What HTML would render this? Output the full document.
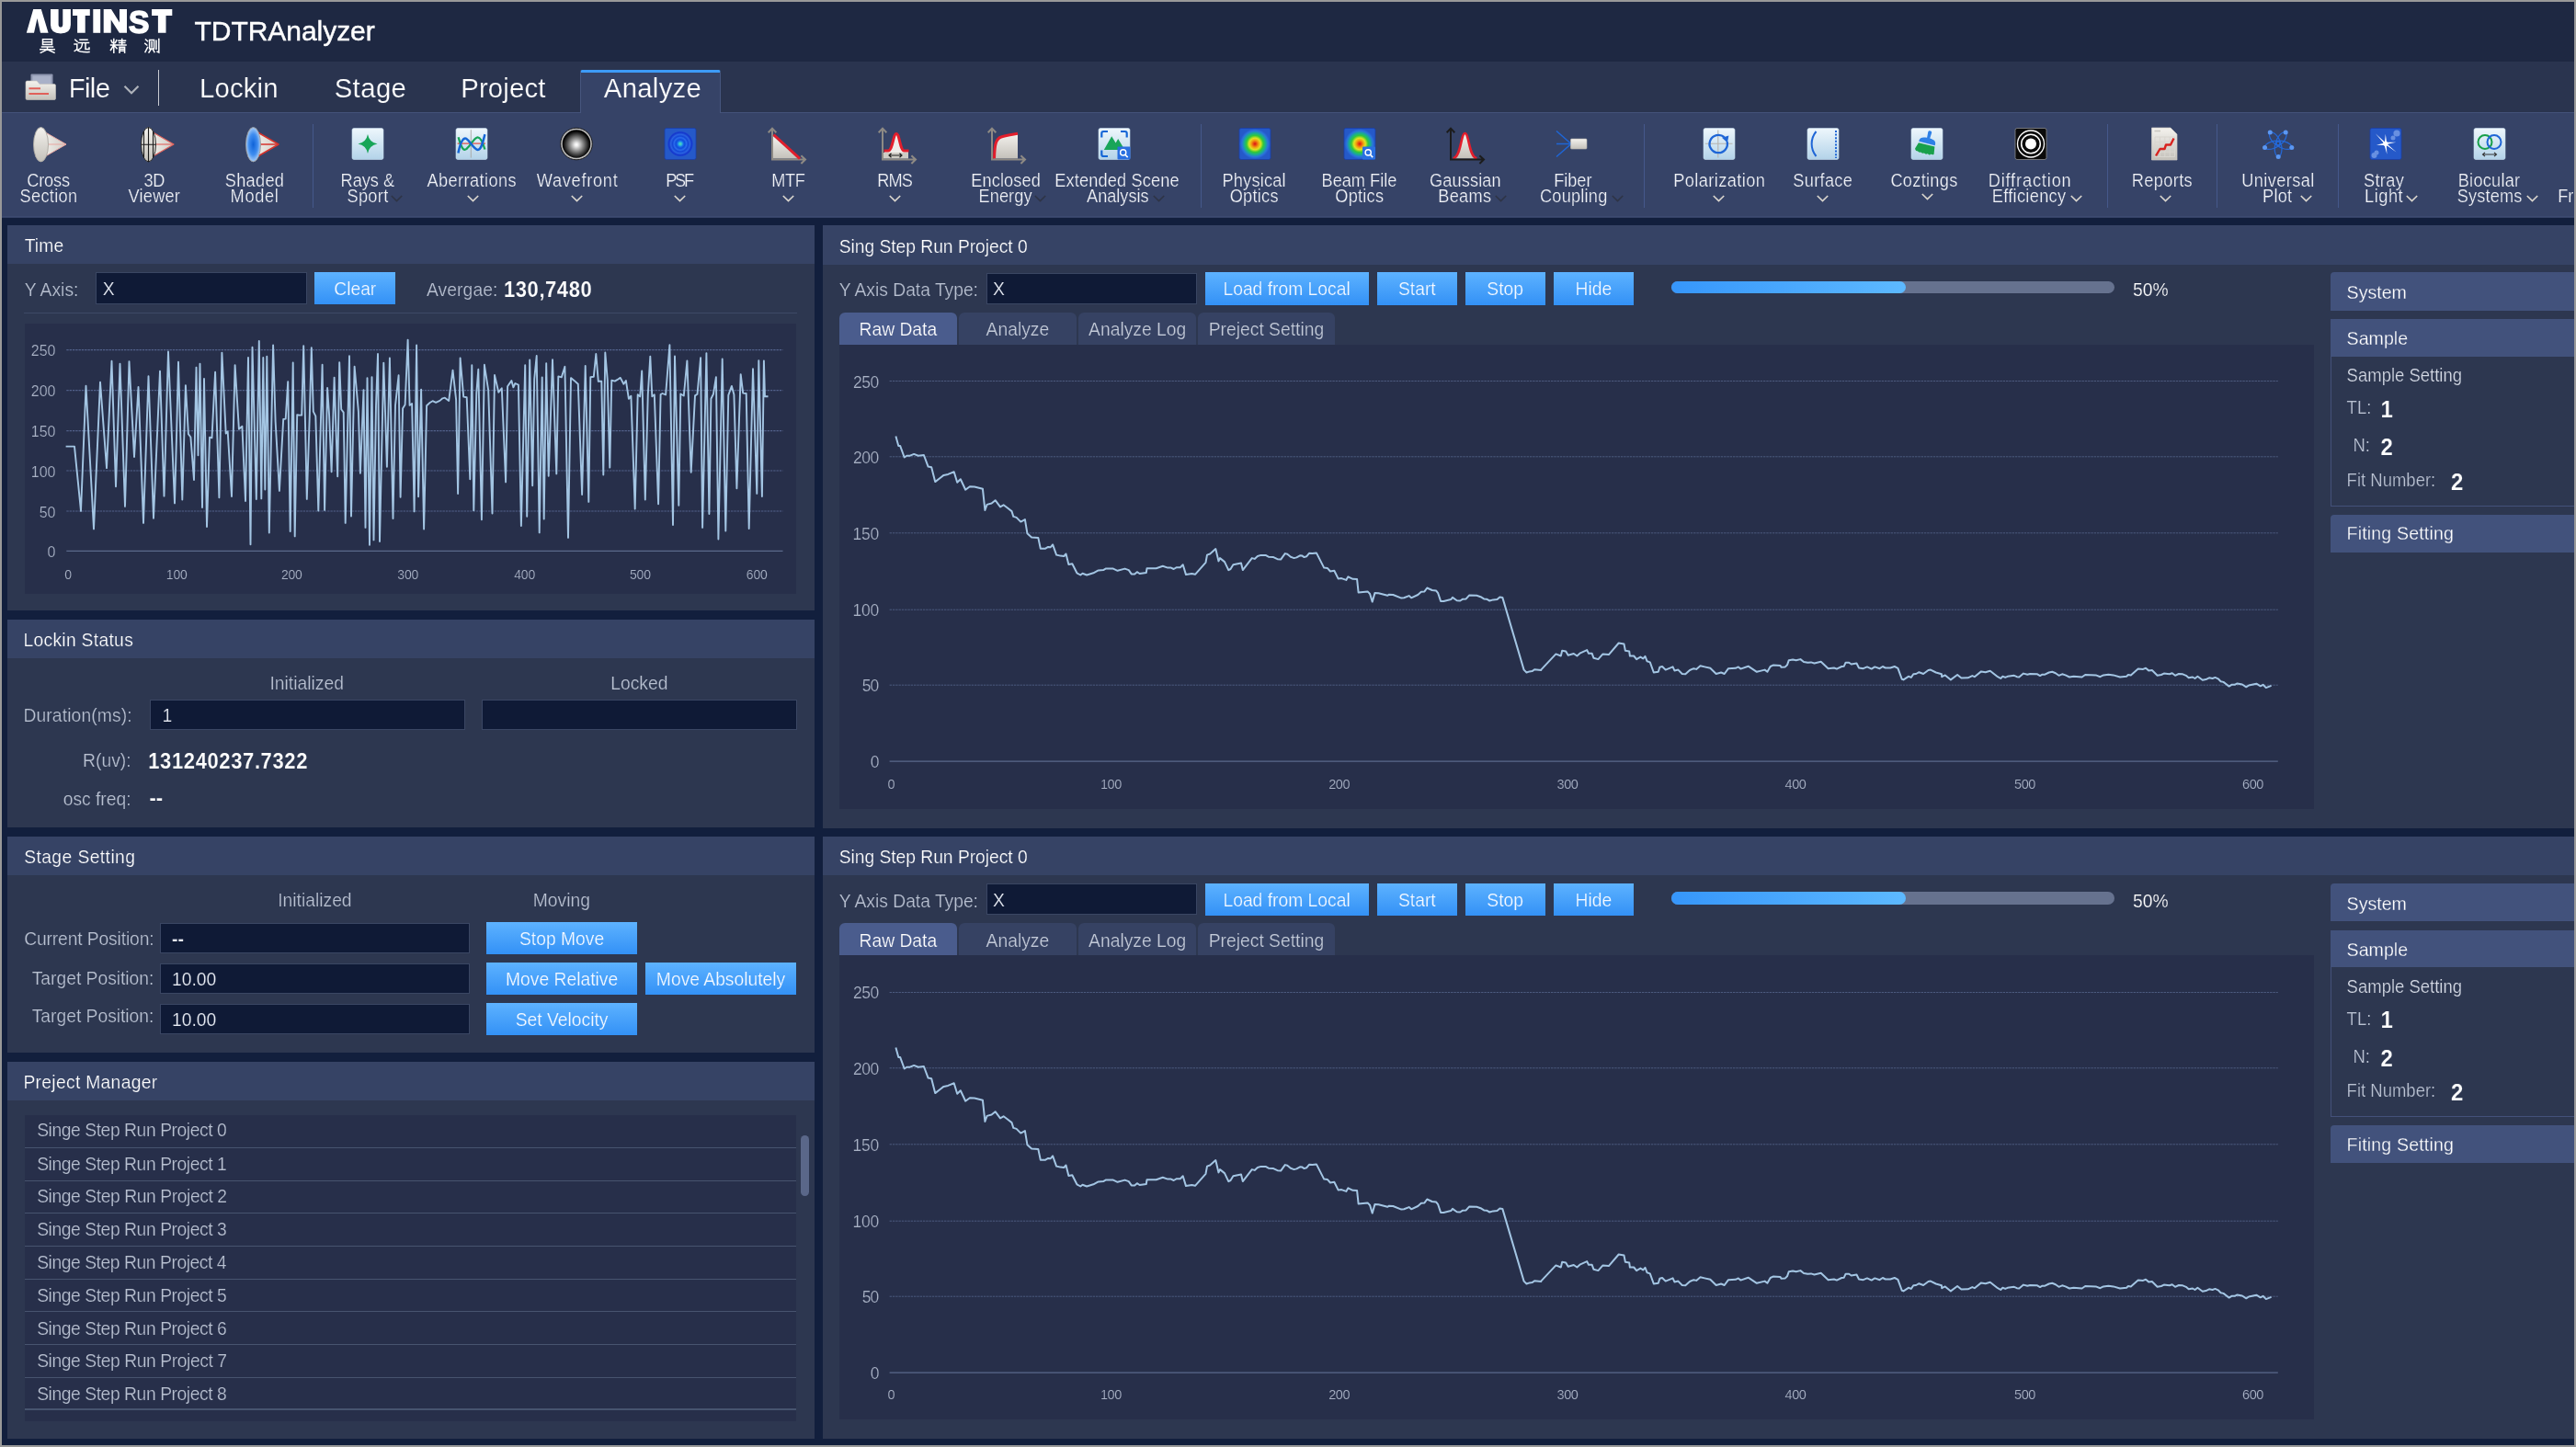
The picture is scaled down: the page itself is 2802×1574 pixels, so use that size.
<!DOCTYPE html>
<html><head><meta charset="utf-8"><title>TDTRAnalyzer</title><style>
*{margin:0;padding:0;box-sizing:border-box}
html,body{width:2802px;height:1574px;overflow:hidden;background:#999}
body{font-family:"Liberation Sans",sans-serif;position:relative}
#app{position:absolute;left:2px;top:2px;width:2798px;height:1570px;background:#121f3d;overflow:hidden}
#root{position:absolute;left:-2px;top:-2px;width:2802px;height:1574px;will-change:transform}
.t{position:absolute;line-height:1;white-space:nowrap}
.panel{background:#2d3750}
.hdr{background:#364365}
.inner{background:#272f4a}
.inp{background:#0f1a36;border:1px solid #3a4663}
.btn{background:linear-gradient(#5db2ff,#3391f6)}
.sep{background:#45588b}
svg{position:absolute;overflow:visible}
</style></head>
<body><div id="app"><div id="root">

<svg width="0" height="0" style="position:absolute"><defs>
<linearGradient id="gTile" x1="0" y1="0" x2="0" y2="1"><stop offset="0" stop-color="#eef7fc"/><stop offset="1" stop-color="#b3d3e9"/></linearGradient>
<linearGradient id="gGrey" x1="0" y1="0" x2="0" y2="1"><stop offset="0" stop-color="#f4f2ee"/><stop offset="1" stop-color="#c4c1ba"/></linearGradient>
<linearGradient id="gGreyH" x1="0" y1="0" x2="1" y2="0"><stop offset="0" stop-color="#f4f2ee"/><stop offset="1" stop-color="#cfccc5"/></linearGradient>
<radialGradient id="gBlueLens"><stop offset="0" stop-color="#0f63d8"/><stop offset="0.6" stop-color="#3f8df0"/><stop offset="1" stop-color="#a9cdf7"/></radialGradient>
<radialGradient id="gSphere" cx="0.5" cy="0.53"><stop offset="0" stop-color="#ffffff"/><stop offset="0.12" stop-color="#ececec"/><stop offset="0.45" stop-color="#8e8e8e"/><stop offset="0.75" stop-color="#3a3a3a"/><stop offset="0.92" stop-color="#0c0c0c"/><stop offset="1" stop-color="#000"/></radialGradient>
<radialGradient id="gPsf"><stop offset="0" stop-color="#5fe0a8"/><stop offset="0.14" stop-color="#28b0e0"/><stop offset="0.25" stop-color="#1a66e6"/><stop offset="0.36" stop-color="#0f4cdc"/><stop offset="0.5" stop-color="#2a6cec"/><stop offset="0.62" stop-color="#1346d6"/><stop offset="0.76" stop-color="#2a64e2"/><stop offset="0.9" stop-color="#1538cc"/><stop offset="1" stop-color="#1a40cf"/></radialGradient>
<radialGradient id="gHeat"><stop offset="0" stop-color="#d41414"/><stop offset="0.1" stop-color="#e84812"/><stop offset="0.24" stop-color="#f0a010"/><stop offset="0.38" stop-color="#dfe322"/><stop offset="0.55" stop-color="#35c837"/><stop offset="0.7" stop-color="#19ae90"/><stop offset="0.86" stop-color="#2a74dc"/><stop offset="1" stop-color="#2559c9"/></radialGradient>
</defs></svg>

<div style="position:absolute;left:2.00px;top:2.00px;width:2798.00px;height:65.00px;background:#1e2842"></div>
<svg style="left:28px;top:9px" width="162" height="50" viewBox="0 0 162 50"><path d="M8.2 1 H16.8 L24.6 26.8 H16 L12.5 11 L9 26.8 H0.8 Z" fill="#fff"/><path d="M27 1 H35.6 V17.5 Q35.6 20.6 38 20.6 Q40.3 20.6 40.3 17.5 V1 H48.9 V18 Q48.9 27.4 38 27.4 Q27 27.4 27 18 Z" fill="#fff"/><path d="M51 1 H69.8 V8 H64.7 V26.8 H56.1 V8 H51 Z" fill="#fff"/><path d="M73.3 1 H81.2 V26.8 H73.3 Z" fill="#fff"/><path d="M84.7 1 H93 L102 15.5 V1 H110 V26.8 H101.8 L92.7 12.5 V26.8 H84.7 Z" fill="#fff"/><text x="112" y="26.5" font-family="Liberation Sans, sans-serif" font-weight="700" font-size="35.2" fill="#fff" stroke="#fff" stroke-width="1.6" textLength="22.4" lengthAdjust="spacingAndGlyphs">S</text><path d="M137.1 1 H159.3 V8 H152.5 V26.8 H143.9 V8 H137.1 Z" fill="#fff"/><g id="cjk" stroke="#fff" stroke-width="1.5" fill="none" stroke-linecap="square"><path d="M18.5 33.8 H28.5 V39.6 H18.5 Z M18.5 36.7 H28.5 M17.5 42 H29.5 M15.8 44.8 H31.2 M23.5 42 V44.8 L16.3 48.3 M23.6 44.8 L31 48.3"/><path d="M59 34.2 H67 M57.5 37.5 H68.5 M61.5 37.5 C61.5 42 60.5 43.5 57.5 45 M65 37.5 V44.5 H69 V43 M53.8 34.2 L56 36.2 M53 39 H55.8 V44.5 L53.2 46.5 M55.8 45.2 C58 47.5 62 47.8 69 47.6"/><path d="M95.8 33.5 V48.3 M92.5 40 H99.2 M93 35 L94.3 37.6 M98.8 34.8 L97.4 37.6 M95.6 40.4 L92.4 45.5 M96 40.4 L99 43.6 M101 35.2 H108.5 M104.7 33.4 V40 M101.6 37.6 H107.8 M100.3 40 H109 M102 42.2 H107.6 V48.3 M102 42.2 V48.3 M102 44.3 H107.6 M102 46.3 H107.6"/><path d="M130.5 34 L132.5 35.8 M129.8 38.4 L131.8 40 M130 47.6 L132.5 42.6 M134.6 34.4 H139.6 V44 H134.6 Z M137.1 36.4 V42 M136.4 44.4 L134 48 M138 44.4 L140 47.6 M142 35.2 V44.2 M144.8 33.6 V48 L143 47.2"/></g></svg>
<div class="t" style="top:19.11px;font-size:30px;color:#ffffff;letter-spacing:-0.05px;left:211.60px;-webkit-text-stroke:0.45px #fff;">TDTRAnalyzer</div>
<div style="position:absolute;left:2.00px;top:67.00px;width:2798.00px;height:56.00px;background:#2a344f"></div>
<svg style="left:27px;top:79px" width="35" height="31" viewBox="0 0 35 31"><rect x="6.5" y="1.5" width="24" height="18" rx="1" fill="#8e96b0"/><rect x="8.5" y="3.5" width="20" height="14" fill="#a9b1c8"/><path d="M1 10.5 Q1 9 2.5 9 H13 L16 12.5 H32 Q33.5 12.5 33.5 14 V28 Q33.5 29.5 32 29.5 H2.5 Q1 29.5 1 28 Z" fill="url(#gGrey)" stroke="#c9c6c0" stroke-width="0.6"/><path d="M4.5 17.2 H17 M4.5 23 H26" stroke="#e0605a" stroke-width="2"/></svg>
<div class="t" style="top:81.30px;font-size:29.3px;color:#ffffff;-webkit-text-stroke:0.21px #2a344f;letter-spacing:-0.617px;left:74.65px;">File</div>
<svg style="left:134px;top:92px" width="18" height="12" viewBox="0 0 18 12"><path d="M1.5 1.8 L9 9.3 L16.5 1.8" fill="none" stroke="#aeb2ba" stroke-width="2.2"/></svg>
<div style="position:absolute;left:171.50px;top:75.50px;width:1.70px;height:39.50px;background:#c9ccd3"></div>
<div style="position:absolute;left:2.00px;top:122.30px;width:2798.00px;height:1.20px;background:#44537a"></div>
<div style="position:absolute;left:631.00px;top:75.50px;width:153.00px;height:48.10px;background:#364367;border-top:3.5px solid #3d9bf7;border-left:1px solid #46567e;border-right:1px solid #46567e;border-radius:2.5px 2.5px 0 0"></div>
<div class="t" style="top:81.30px;font-size:29.3px;color:#ffffff;-webkit-text-stroke:0.21px #2a344f;letter-spacing:0.15px;left:217.05px;">Lockin</div>
<div class="t" style="top:81.30px;font-size:29.3px;color:#ffffff;-webkit-text-stroke:0.21px #2a344f;letter-spacing:0.425px;left:363.65px;">Stage</div>
<div class="t" style="top:81.30px;font-size:29.3px;color:#ffffff;-webkit-text-stroke:0.21px #2a344f;letter-spacing:0.158px;left:501.25px;">Project</div>
<div class="t" style="top:81.30px;font-size:29.3px;color:#ffffff;-webkit-text-stroke:0.21px #364367;letter-spacing:0.3px;left:656.80px;">Analyze</div>
<div style="position:absolute;left:2.00px;top:123.00px;width:2798.00px;height:113.50px;background:#364367"></div>
<div style="position:absolute;left:2.00px;top:235.40px;width:2798.00px;height:1.10px;background:#3c4a70"></div>
<svg style="left:35.1px;top:134px" width="44" height="44" viewBox="0 0 44 44"><path d="M11 8 L37 23 L11 38 Z" fill="url(#gGreyH)" stroke="#e9a7a2" stroke-width="1.0" stroke-linejoin="round"/><path d="M11 23 L37 23" stroke="#e9a7a2" stroke-width="1.0"/><ellipse cx="9.5" cy="23.2" rx="8" ry="18.7" fill="url(#gGrey)" stroke="#aaa7a0" stroke-width="0.9"/></svg>
<div class="t" style="top:187.89px;font-size:18.2px;color:#f0f2f7;-webkit-text-stroke:0.22px #364367;transform:scaleY(1.1);transform-origin:0 84.65%;letter-spacing:-0.188px;left:29.25px;">Cross</div>
<div class="t" style="top:205.49px;font-size:18.2px;color:#f0f2f7;-webkit-text-stroke:0.22px #364367;transform:scaleY(1.1);transform-origin:0 84.65%;letter-spacing:0.325px;left:21.55px;">Section</div>
<svg style="left:151.7px;top:134px" width="44" height="44" viewBox="0 0 44 44"><path d="M11 8 L37 23 L11 38 Z" fill="url(#gGreyH)" stroke="#e0625c" stroke-width="1.1" stroke-linejoin="round"/><path d="M11 23 L37 23" stroke="#e0625c" stroke-width="1.1"/><ellipse cx="9.5" cy="23.2" rx="8" ry="18.7" fill="url(#gGrey)" stroke="#1a1a1a" stroke-width="0.9"/><path d="M9.5 4.5 V42 M4.5 9 V37.5 M14.5 9 V37.5 M1.6 23.2 H17.4" stroke="#1a1a1a" stroke-width="1.1" fill="none"/></svg>
<div class="t" style="top:187.89px;font-size:18.2px;color:#f0f2f7;-webkit-text-stroke:0.22px #364367;transform:scaleY(1.1);transform-origin:0 84.65%;letter-spacing:-0.5px;left:156.60px;">3D</div>
<div class="t" style="top:205.49px;font-size:18.2px;color:#f0f2f7;-webkit-text-stroke:0.22px #364367;transform:scaleY(1.1);transform-origin:0 84.65%;letter-spacing:0.21px;left:139.60px;">Viewer</div>
<svg style="left:265.8px;top:134px" width="44" height="44" viewBox="0 0 44 44"><path d="M11 8 L37 23 L11 38 Z" fill="url(#gGreyH)" stroke="#d6332c" stroke-width="1.5" stroke-linejoin="round"/><path d="M11 23 L37 23" stroke="#d6332c" stroke-width="1.5"/><ellipse cx="9.5" cy="23.2" rx="8" ry="18.7" fill="url(#gBlueLens)" stroke="#9a9a9a" stroke-width="0.9"/></svg>
<div class="t" style="top:187.89px;font-size:18.2px;color:#f0f2f7;-webkit-text-stroke:0.22px #364367;transform:scaleY(1.1);transform-origin:0 84.65%;letter-spacing:0.3px;left:244.75px;">Shaded</div>
<div class="t" style="top:205.49px;font-size:18.2px;color:#f0f2f7;-webkit-text-stroke:0.22px #364367;transform:scaleY(1.1);transform-origin:0 84.65%;letter-spacing:0.688px;left:250.55px;">Model</div>
<svg style="left:378.2px;top:134px" width="44" height="44" viewBox="0 0 44 44"><rect x="5" y="5.5" width="34" height="34" rx="2" fill="url(#gTile)" stroke="#c9dff0" stroke-width="0.6"/><path d="M22 12 Q23.6 20.9 32.5 22.5 Q23.6 24.1 22 33 Q20.4 24.1 11.5 22.5 Q20.4 20.9 22 12 Z" fill="#18a558"/></svg>
<div class="t" style="top:187.89px;font-size:18.2px;color:#f0f2f7;-webkit-text-stroke:0.22px #364367;transform:scaleY(1.1);transform-origin:0 84.65%;letter-spacing:-0.03px;left:370.55px;">Rays &amp;</div>
<div class="t" style="top:205.49px;font-size:18.2px;color:#f0f2f7;-webkit-text-stroke:0.22px #364367;transform:scaleY(1.1);transform-origin:0 84.65%;letter-spacing:0.338px;left:377.45px;">Sport</div>
<svg style="left:425.2px;top:211.6px" width="13" height="8" viewBox="0 0 13 8"><path d="M0.8 1 L6.5 6.6 L12.2 1" fill="none" stroke="#2e3446" stroke-width="1.7"/></svg>
<svg style="left:491.0px;top:134px" width="44" height="44" viewBox="0 0 44 44"><rect x="5" y="5.5" width="34" height="34" rx="2" fill="url(#gTile)" stroke="#c9dff0" stroke-width="0.6"/><path d="M21.3 7.2 V37.6" stroke="#a9a6a0" stroke-width="0.9"/><path d="M6.6 22.1 H37" stroke="#e0605a" stroke-width="1.4"/><path d="M7.6 15.3 C9.5 22 11.5 28.9 14.5 28.9 C19 28.9 24 15.3 28.7 15.3 C32 15.3 34.5 22 36.4 28.5" stroke="#18a558" stroke-width="2.3" fill="none"/><path d="M7.4 32.6 C9.5 22 12 16.5 15.1 16.5 C19 16.5 24 28.9 28.7 28.9 C32.5 28.9 34.5 20 36.4 12.1" stroke="#1466d6" stroke-width="2.5" fill="none"/></svg>
<div class="t" style="top:187.89px;font-size:18.2px;color:#f0f2f7;-webkit-text-stroke:0.22px #364367;transform:scaleY(1.1);transform-origin:0 84.65%;letter-spacing:0.41px;left:464.50px;">Aberrations</div>
<svg style="left:508.2px;top:211.6px" width="13" height="8" viewBox="0 0 13 8"><path d="M0.8 1 L6.5 6.6 L12.2 1" fill="none" stroke="#d9d5cd" stroke-width="1.7"/></svg>
<svg style="left:605.0px;top:134px" width="44" height="44" viewBox="0 0 44 44"><circle cx="22" cy="22.5" r="17.3" fill="#bdbdbd" stroke="#141414" stroke-width="0.9"/><circle cx="22" cy="22.5" r="15.3" fill="url(#gSphere)"/></svg>
<div class="t" style="top:187.89px;font-size:18.2px;color:#f0f2f7;-webkit-text-stroke:0.22px #364367;transform:scaleY(1.1);transform-origin:0 84.65%;letter-spacing:0.725px;left:583.75px;">Wavefront</div>
<svg style="left:620.7px;top:211.6px" width="13" height="8" viewBox="0 0 13 8"><path d="M0.8 1 L6.5 6.6 L12.2 1" fill="none" stroke="#d9d5cd" stroke-width="1.7"/></svg>
<svg style="left:718.4px;top:134px" width="44" height="44" viewBox="0 0 44 44"><rect x="5" y="5.5" width="34" height="34" rx="2" fill="#2559c9" stroke="#1b3fa8" stroke-width="0.8"/><circle cx="22" cy="22.5" r="13.6" fill="url(#gPsf)"/></svg>
<div class="t" style="top:187.89px;font-size:18.2px;color:#f0f2f7;-webkit-text-stroke:0.22px #364367;transform:scaleY(1.1);transform-origin:0 84.65%;letter-spacing:-2.15px;left:724.15px;">PSF</div>
<svg style="left:733.2px;top:211.6px" width="13" height="8" viewBox="0 0 13 8"><path d="M0.8 1 L6.5 6.6 L12.2 1" fill="none" stroke="#d9d5cd" stroke-width="1.7"/></svg>
<svg style="left:829.5px;top:134px" width="44" height="44" viewBox="0 0 44 44"><path d="M11 14 L39 38.6 H11 Z" fill="url(#gGrey)"/><path d="M10 39.6 V5.8 M5.7 10.2 L10 5.6 L14.3 10.2" stroke="#8e8a84" stroke-width="2" fill="none"/><path d="M9 39.6 H45.6 M41.4 35.3 L46 39.6 L41.4 43.9" stroke="#8e8a84" stroke-width="2" fill="none"/><path d="M11.5 12.5 L40 38.6" stroke="#e21e2c" stroke-width="3"/></svg>
<div class="t" style="top:187.89px;font-size:18.2px;color:#f0f2f7;-webkit-text-stroke:0.22px #364367;transform:scaleY(1.1);transform-origin:0 84.65%;letter-spacing:-0.4px;left:839.25px;">MTF</div>
<svg style="left:851.1px;top:211.6px" width="13" height="8" viewBox="0 0 13 8"><path d="M0.8 1 L6.5 6.6 L12.2 1" fill="none" stroke="#d9d5cd" stroke-width="1.7"/></svg>
<svg style="left:949.5px;top:134px" width="44" height="44" viewBox="0 0 44 44"><path d="M11 32 H38 V38.6 H11 Z" fill="#cfccc5"/><path d="M12 30 H16 C21 30 21.5 11.5 25 11.5 S29 30 33.5 30 H38 V32 H12 Z" fill="#efedea"/><path d="M11.5 30 H16 C21 30 21.5 11.5 25 11.5 S29 30 33.5 30 H38.5" stroke="#e21e2c" stroke-width="3" fill="none"/><path d="M10 39.6 V5.8 M5.7 10.2 L10 5.6 L14.3 10.2" stroke="#8e8a84" stroke-width="2" fill="none"/><path d="M9 39.6 H45.6 M41.4 35.3 L46 39.6 L41.4 43.9" stroke="#8e8a84" stroke-width="2" fill="none"/><path d="M17 35 H31 M19.5 32.7 L17 35 L19.5 37.3 M28.5 32.7 L31 35 L28.5 37.3" stroke="#222" stroke-width="1.2" fill="none"/></svg>
<div class="t" style="top:187.89px;font-size:18.2px;color:#f0f2f7;-webkit-text-stroke:0.22px #364367;transform:scaleY(1.1);transform-origin:0 84.65%;letter-spacing:-0.8px;left:954.15px;">RMS</div>
<svg style="left:967.0px;top:211.6px" width="13" height="8" viewBox="0 0 13 8"><path d="M0.8 1 L6.5 6.6 L12.2 1" fill="none" stroke="#d9d5cd" stroke-width="1.7"/></svg>
<svg style="left:1068.6px;top:134px" width="44" height="44" viewBox="0 0 44 44"><path d="M12 38.6 C12.5 22 14 16.5 20 14.5 C26 12.5 32 12 38 11 V38.6 Z" fill="url(#gGrey)"/><path d="M12.5 38.6 C13 22 14.5 17 20 15 C26 13 32 12.3 38 11.2" stroke="#e21e2c" stroke-width="3" fill="none"/><path d="M10 39.6 V5.8 M5.7 10.2 L10 5.6 L14.3 10.2" stroke="#8e8a84" stroke-width="2" fill="none"/><path d="M9 39.6 H45.6 M41.4 35.3 L46 39.6 L41.4 43.9" stroke="#8e8a84" stroke-width="2" fill="none"/></svg>
<div class="t" style="top:187.89px;font-size:18.2px;color:#f0f2f7;-webkit-text-stroke:0.22px #364367;transform:scaleY(1.1);transform-origin:0 84.65%;letter-spacing:0.1px;left:1056.25px;">Enclosed</div>
<div class="t" style="top:205.49px;font-size:18.2px;color:#f0f2f7;-webkit-text-stroke:0.22px #364367;transform:scaleY(1.1);transform-origin:0 84.65%;letter-spacing:0.1px;left:1064.45px;">Energy</div>
<svg style="left:1124.5px;top:211.6px" width="13" height="8" viewBox="0 0 13 8"><path d="M0.8 1 L6.5 6.6 L12.2 1" fill="none" stroke="#2e3446" stroke-width="1.7"/></svg>
<svg style="left:1190.4px;top:134px" width="44" height="44" viewBox="0 0 44 44"><rect x="5" y="5.5" width="34" height="34" rx="2" fill="url(#gTile)" stroke="#c9dff0" stroke-width="0.6"/><path d="M8.3 15.5 V11 Q8.3 9 10.3 9 H15 M29 9 H33.7 Q35.7 9 35.7 11 V15.5 M8.3 29.5 V34 Q8.3 36 10.3 36 H15" stroke="#1466d6" stroke-width="2.2" fill="none"/><path d="M10.8 29 L19.2 14.2 L23.6 21.5 L26.2 17 L33.4 29 Z" fill="#18a558"/><rect x="25.5" y="25.5" width="14" height="14" rx="1" fill="#2a6fe0"/><circle cx="31.7" cy="31.9" r="3.1" fill="none" stroke="#fff" stroke-width="1.4"/><path d="M33.9 34.3 L36.7 37.1" stroke="#fff" stroke-width="1.6"/></svg>
<div class="t" style="top:187.89px;font-size:18.2px;color:#f0f2f7;-webkit-text-stroke:0.22px #364367;transform:scaleY(1.1);transform-origin:0 84.65%;letter-spacing:0.135px;left:1147.35px;">Extended Scene</div>
<div class="t" style="top:205.49px;font-size:18.2px;color:#f0f2f7;-webkit-text-stroke:0.22px #364367;transform:scaleY(1.1);transform-origin:0 84.65%;letter-spacing:-0.036px;left:1182.10px;">Analysis</div>
<svg style="left:1253.6px;top:211.6px" width="13" height="8" viewBox="0 0 13 8"><path d="M0.8 1 L6.5 6.6 L12.2 1" fill="none" stroke="#2e3446" stroke-width="1.7"/></svg>
<svg style="left:1343.4px;top:134px" width="44" height="44" viewBox="0 0 44 44"><rect x="5" y="5.5" width="34" height="34" rx="2" fill="#2559c9" stroke="#1b3fa8" stroke-width="0.8"/><circle cx="22" cy="22.5" r="16.5" fill="url(#gHeat)"/></svg>
<div class="t" style="top:187.89px;font-size:18.2px;color:#f0f2f7;-webkit-text-stroke:0.22px #364367;transform:scaleY(1.1);transform-origin:0 84.65%;letter-spacing:0.214px;left:1329.45px;">Physical</div>
<div class="t" style="top:205.49px;font-size:18.2px;color:#f0f2f7;-webkit-text-stroke:0.22px #364367;transform:scaleY(1.1);transform-origin:0 84.65%;letter-spacing:0.27px;left:1337.65px;">Optics</div>
<svg style="left:1457.1px;top:134px" width="44" height="44" viewBox="0 0 44 44"><rect x="5" y="5.5" width="34" height="34" rx="2" fill="#2559c9" stroke="#1b3fa8" stroke-width="0.8"/><circle cx="22" cy="22.5" r="16.5" fill="url(#gHeat)"/><rect x="25" y="25.5" width="14" height="14" rx="1" fill="#2a6fe0"/><circle cx="31.2" cy="31.9" r="3.1" fill="none" stroke="#fff" stroke-width="1.4"/><path d="M33.4 34.3 L36.2 37.1" stroke="#fff" stroke-width="1.6"/></svg>
<div class="t" style="top:187.89px;font-size:18.2px;color:#f0f2f7;-webkit-text-stroke:0.22px #364367;transform:scaleY(1.1);transform-origin:0 84.65%;left:1437.50px;">Beam File</div>
<div class="t" style="top:205.49px;font-size:18.2px;color:#f0f2f7;-webkit-text-stroke:0.22px #364367;transform:scaleY(1.1);transform-origin:0 84.65%;letter-spacing:0.25px;left:1452.25px;">Optics</div>
<svg style="left:1568.0px;top:134px" width="44" height="44" viewBox="0 0 44 44"><path d="M13 38.6 C21 38.6 21 11 25.5 11 S30 38.6 38 38.6 Z" fill="url(#gGrey)"/><path d="M12.5 38.1 C21 38.1 21 11 25.5 11 S30 38.1 38.5 38.1" stroke="#e21e2c" stroke-width="2.6" fill="none"/><path d="M10 39.6 V5.8 M5.7 10.2 L10 5.6 L14.3 10.2" stroke="#1c1c1c" stroke-width="2" fill="none"/><path d="M9 39.6 H45.6 M41.4 35.3 L46 39.6 L41.4 43.9" stroke="#1c1c1c" stroke-width="2" fill="none"/></svg>
<div class="t" style="top:187.89px;font-size:18.2px;color:#f0f2f7;-webkit-text-stroke:0.22px #364367;transform:scaleY(1.1);transform-origin:0 84.65%;letter-spacing:0.129px;left:1554.95px;">Gaussian</div>
<div class="t" style="top:205.49px;font-size:18.2px;color:#f0f2f7;-webkit-text-stroke:0.22px #364367;transform:scaleY(1.1);transform-origin:0 84.65%;letter-spacing:0.288px;left:1564.25px;">Beams</div>
<svg style="left:1626.0px;top:211.6px" width="13" height="8" viewBox="0 0 13 8"><path d="M0.8 1 L6.5 6.6 L12.2 1" fill="none" stroke="#2e3446" stroke-width="1.7"/></svg>
<svg style="left:1689.2px;top:134px" width="44" height="44" viewBox="0 0 44 44"><path d="M4 8.5 L20 22.5 L4 36.5 M4 22.5 H20" stroke="#1f66d6" stroke-width="1.5" fill="none"/><rect x="19.5" y="17" width="17.5" height="11" rx="1" fill="url(#gGrey)" stroke="#b9b6b0" stroke-width="0.6"/></svg>
<div class="t" style="top:187.89px;font-size:18.2px;color:#f0f2f7;-webkit-text-stroke:0.22px #364367;transform:scaleY(1.1);transform-origin:0 84.65%;letter-spacing:-0.013px;left:1690.15px;">Fiber</div>
<div class="t" style="top:205.49px;font-size:18.2px;color:#f0f2f7;-webkit-text-stroke:0.22px #364367;transform:scaleY(1.1);transform-origin:0 84.65%;letter-spacing:0.229px;left:1674.95px;">Coupling</div>
<svg style="left:1753.0px;top:211.6px" width="13" height="8" viewBox="0 0 13 8"><path d="M0.8 1 L6.5 6.6 L12.2 1" fill="none" stroke="#2e3446" stroke-width="1.7"/></svg>
<svg style="left:1848.3px;top:134px" width="44" height="44" viewBox="0 0 44 44"><rect x="5" y="5.5" width="34" height="34" rx="2" fill="url(#gTile)" stroke="#c9dff0" stroke-width="0.6"/><path d="M20.8 7.5 V37.5 M6.8 22.3 H36.5" stroke="#b7b4ae" stroke-width="1.1"/><path d="M27.6 15.2 A9.7 9.7 0 1 0 30.6 20" stroke="#1f66d6" stroke-width="2.3" fill="none"/><path d="M25 15.8 L32.4 13.6 L31 21.2 Z" fill="#1f66d6"/></svg>
<div class="t" style="top:187.89px;font-size:18.2px;color:#f0f2f7;-webkit-text-stroke:0.22px #364367;transform:scaleY(1.1);transform-origin:0 84.65%;letter-spacing:0.432px;left:1820.15px;">Polarization</div>
<svg style="left:1863.3px;top:211.6px" width="13" height="8" viewBox="0 0 13 8"><path d="M0.8 1 L6.5 6.6 L12.2 1" fill="none" stroke="#d9d5cd" stroke-width="1.7"/></svg>
<svg style="left:1960.7px;top:134px" width="44" height="44" viewBox="0 0 44 44"><rect x="5" y="5.5" width="34" height="34" rx="2" fill="url(#gTile)" stroke="#c9dff0" stroke-width="0.6"/><path d="M14.5 9 C8 17 8 28 14.5 36" stroke="#1f66d6" stroke-width="2" fill="none"/><path d="M36 8 V38" stroke="#1f66d6" stroke-width="2" stroke-dasharray="2 1.6"/></svg>
<div class="t" style="top:187.89px;font-size:18.2px;color:#f0f2f7;-webkit-text-stroke:0.22px #364367;transform:scaleY(1.1);transform-origin:0 84.65%;letter-spacing:0.325px;left:1950.25px;">Surface</div>
<svg style="left:1975.8px;top:211.6px" width="13" height="8" viewBox="0 0 13 8"><path d="M0.8 1 L6.5 6.6 L12.2 1" fill="none" stroke="#d9d5cd" stroke-width="1.7"/></svg>
<svg style="left:2074.4px;top:134px" width="44" height="44" viewBox="0 0 44 44"><rect x="5" y="5.5" width="34" height="34" rx="2" fill="url(#gTile)" stroke="#c9dff0" stroke-width="0.6"/><g transform="rotate(14 22 22)"><path d="M20.2 9.5 C20.2 7.3 24.2 7.3 24.2 9.5 L23.8 16 C28.5 16.2 31 17.8 31 20.5 V22 H13 V20.5 C13 17.8 15.5 16.2 20.6 16 Z" fill="#2e80e6"/><path d="M13 23.4 H31 L32.2 31.5 C31 33.5 29.5 31.5 28.3 33 C27 34.3 25.8 32 24.5 33.3 C23.2 34.5 22 32.2 20.8 33.3 C19.5 34.4 18.3 32.2 17 33.2 C15.8 34 14.5 32 13.5 32.6 C12.3 33 11.3 31.8 10.8 30.5 Z" fill="#18a04a"/></g></svg>
<div class="t" style="top:187.89px;font-size:18.2px;color:#f0f2f7;-webkit-text-stroke:0.22px #364367;transform:scaleY(1.1);transform-origin:0 84.65%;letter-spacing:0.3px;left:2056.45px;">Coztings</div>
<svg style="left:2089.5px;top:209.6px" width="13" height="8" viewBox="0 0 13 8"><path d="M0.8 1 L6.5 6.6 L12.2 1" fill="none" stroke="#d9d5cd" stroke-width="1.7"/></svg>
<svg style="left:2187.1px;top:134px" width="44" height="44" viewBox="0 0 44 44"><rect x="5" y="5.5" width="34" height="34" rx="2" fill="#0b0b0b" stroke="#8a8a8a" stroke-width="0.8"/><circle cx="22" cy="22.5" r="6" fill="#fff"/><circle cx="22" cy="22.5" r="10.3" fill="none" stroke="#fff" stroke-width="1.5"/><circle cx="22" cy="22.5" r="14.5" fill="none" stroke="#fff" stroke-width="1.3"/></svg>
<div class="t" style="top:187.89px;font-size:18.2px;color:#f0f2f7;-webkit-text-stroke:0.22px #364367;transform:scaleY(1.1);transform-origin:0 84.65%;letter-spacing:0.855px;left:2162.65px;">Diffraction</div>
<div class="t" style="top:205.49px;font-size:18.2px;color:#f0f2f7;-webkit-text-stroke:0.22px #364367;transform:scaleY(1.1);transform-origin:0 84.65%;letter-spacing:0.311px;left:2166.75px;">Efficiency</div>
<svg style="left:2252.3px;top:211.6px" width="13" height="8" viewBox="0 0 13 8"><path d="M0.8 1 L6.5 6.6 L12.2 1" fill="none" stroke="#d9d5cd" stroke-width="1.7"/></svg>
<svg style="left:2331.7px;top:134px" width="44" height="44" viewBox="0 0 44 44"><path d="M8.5 5 H29 L36 12 V40 H8.5 Z" fill="url(#gGrey)" stroke="#cfccc6" stroke-width="0.7"/><path d="M11.5 8.5 H18" stroke="#c9c6c0" stroke-width="1.6"/><path d="M12 15 H33.5 V36.5 H12 Z M12 20.4 H33.5 M12 25.8 H33.5 M12 31.2 H33.5 M17.4 15 V36.5 M22.8 15 V36.5 M28.2 15 V36.5" stroke="#d9d6d0" stroke-width="1" fill="none"/><path d="M13 35.5 L17.5 28 H22.5 L24 23.5 H29 L32.5 16.5" stroke="#d8231f" stroke-width="2.4" fill="none" stroke-linejoin="round"/></svg>
<div class="t" style="top:187.89px;font-size:18.2px;color:#f0f2f7;-webkit-text-stroke:0.22px #364367;transform:scaleY(1.1);transform-origin:0 84.65%;letter-spacing:0.375px;left:2318.75px;">Reports</div>
<svg style="left:2348.5px;top:211.6px" width="13" height="8" viewBox="0 0 13 8"><path d="M0.8 1 L6.5 6.6 L12.2 1" fill="none" stroke="#d9d5cd" stroke-width="1.7"/></svg>
<svg style="left:2456.1px;top:134px" width="44" height="44" viewBox="0 0 44 44"><g stroke="#2468d8" stroke-width="1.25" fill="none"><ellipse cx="18.3" cy="16.9" rx="8.4" ry="3.9" transform="rotate(-126.9 18.3 16.9)"/><ellipse cx="25.5" cy="16.9" rx="8.2" ry="3.9" transform="rotate(-55.3 25.5 16.9)"/><ellipse cx="15.9" cy="23.8" rx="8.8" ry="3.9" transform="rotate(162.2 15.9 23.8)"/><ellipse cx="28.3" cy="23.8" rx="8.9" ry="3.9" transform="rotate(17.5 28.3 23.8)"/><ellipse cx="22.1" cy="28.0" rx="8.4" ry="3.9" transform="rotate(89.5 22.1 28.0)"/></g><circle cx="22.07" cy="21.85" r="2.5" fill="none" stroke="#2468d8" stroke-width="1.5"/><g fill="#5b97f2"><circle cx="13.26" cy="10.1" r="2.5"/><circle cx="30.2" cy="10.1" r="2.5"/><circle cx="7.55" cy="26.5" r="2.5"/><circle cx="36.8" cy="26.5" r="2.5"/><circle cx="22.2" cy="36.4" r="2.5"/></g></svg>
<div class="t" style="top:187.89px;font-size:18.2px;color:#f0f2f7;-webkit-text-stroke:0.22px #364367;transform:scaleY(1.1);transform-origin:0 84.65%;letter-spacing:0.4px;left:2438.25px;">Universal</div>
<div class="t" style="top:205.49px;font-size:18.2px;color:#f0f2f7;-webkit-text-stroke:0.22px #364367;transform:scaleY(1.1);transform-origin:0 84.65%;letter-spacing:0.233px;left:2461.05px;">Plot</div>
<svg style="left:2501.5px;top:211.6px" width="13" height="8" viewBox="0 0 13 8"><path d="M0.8 1 L6.5 6.6 L12.2 1" fill="none" stroke="#d9d5cd" stroke-width="1.7"/></svg>
<svg style="left:2572.7px;top:134px" width="44" height="44" viewBox="0 0 44 44"><rect x="5" y="5.5" width="34" height="34" rx="2" fill="#2559c9" stroke="#1b3fa8" stroke-width="0.8"/><g fill="#7fa3ea" opacity="0.75"><circle cx="34" cy="11" r="3.6"/><circle cx="30" cy="16" r="2.5"/><circle cx="12" cy="32" r="2.5"/><circle cx="9.5" cy="35" r="3"/></g><path d="M10.8 11.3 L21.0 20.5 L21.8 11.8 L23.1 20.8 L33.2 20.7 L23.7 22.8 L33.6 31.5 L22.8 24.0 L23.4 33.7 L20.6 23.9 L11.9 23.7 L19.9 21.7 Z" fill="#fff"/><circle cx="21.8" cy="22.3" r="2.6" fill="#fff"/></svg>
<div class="t" style="top:187.89px;font-size:18.2px;color:#f0f2f7;-webkit-text-stroke:0.22px #364367;transform:scaleY(1.1);transform-origin:0 84.65%;letter-spacing:0.35px;left:2570.95px;">Stray</div>
<div class="t" style="top:205.49px;font-size:18.2px;color:#f0f2f7;-webkit-text-stroke:0.22px #364367;transform:scaleY(1.1);transform-origin:0 84.65%;letter-spacing:0.537px;left:2572.05px;">Light</div>
<svg style="left:2617.2px;top:211.6px" width="13" height="8" viewBox="0 0 13 8"><path d="M0.8 1 L6.5 6.6 L12.2 1" fill="none" stroke="#d9d5cd" stroke-width="1.7"/></svg>
<svg style="left:2686.4px;top:134px" width="44" height="44" viewBox="0 0 44 44"><rect x="5" y="5.5" width="34" height="34" rx="2" fill="url(#gTile)" stroke="#c9dff0" stroke-width="0.6"/><circle cx="17" cy="20.5" r="7.5" fill="none" stroke="#18a04a" stroke-width="2"/><circle cx="27" cy="20.5" r="7.5" fill="none" stroke="#1f66d6" stroke-width="2"/><path d="M14.5 34 H29.5 M17 31.8 L14.5 34 L17 36.2 M27 31.8 L29.5 34 L27 36.2" stroke="#333" stroke-width="1.1" fill="none"/></svg>
<div class="t" style="top:187.89px;font-size:18.2px;color:#f0f2f7;-webkit-text-stroke:0.22px #364367;transform:scaleY(1.1);transform-origin:0 84.65%;letter-spacing:0.243px;left:2673.75px;">Biocular</div>
<div class="t" style="top:205.49px;font-size:18.2px;color:#f0f2f7;-webkit-text-stroke:0.22px #364367;transform:scaleY(1.1);transform-origin:0 84.65%;letter-spacing:0.133px;left:2672.85px;">Systems</div>
<svg style="left:2748.2px;top:211.6px" width="13" height="8" viewBox="0 0 13 8"><path d="M0.8 1 L6.5 6.6 L12.2 1" fill="none" stroke="#d9d5cd" stroke-width="1.7"/></svg>
<div class="sep" style="position:absolute;left:339.90px;top:135.00px;width:1.20px;height:91.00px;"></div>
<div class="sep" style="position:absolute;left:1306.10px;top:135.00px;width:1.20px;height:91.00px;"></div>
<div class="sep" style="position:absolute;left:1788.20px;top:135.00px;width:1.20px;height:91.00px;"></div>
<div class="sep" style="position:absolute;left:2291.80px;top:135.00px;width:1.20px;height:91.00px;"></div>
<div class="sep" style="position:absolute;left:2410.80px;top:135.00px;width:1.20px;height:91.00px;"></div>
<div class="sep" style="position:absolute;left:2543.10px;top:135.00px;width:1.20px;height:91.00px;"></div>
<div class="t" style="top:205.49px;font-size:18.2px;color:#f0f2f7;-webkit-text-stroke:0.22px #364367;transform:scaleY(1.1);transform-origin:0 84.65%;left:2782.20px;">Frc</div>
<div class="panel" style="position:absolute;left:8.00px;top:245.00px;width:878.00px;height:419.00px;"></div>
<div class="hdr" style="position:absolute;left:8.00px;top:245.00px;width:878.00px;height:42.00px;"></div>
<div class="t" style="top:258.26px;font-size:19.3px;color:#ffffff;-webkit-text-stroke:0.23px #364365;transform:scaleY(1.05);transform-origin:0 84.65%;letter-spacing:0.117px;left:26.65px;">Time</div>
<div class="t" style="top:305.76px;font-size:19.3px;color:#b9c1d1;-webkit-text-stroke:0.23px #2d3750;transform:scaleY(1.05);transform-origin:0 84.65%;letter-spacing:0.042px;left:26.65px;">Y Axis:</div>
<div class="inp" style="position:absolute;left:104.00px;top:296.40px;width:229.70px;height:34.90px;"></div>
<div class="t" style="top:305.31px;font-size:19.3px;color:#e9edf5;-webkit-text-stroke:0.23px #0f1a36;transform:scaleY(1.05);transform-origin:0 84.65%;left:111.80px;">X</div>
<div class="btn" style="position:absolute;left:342.40px;top:296.40px;width:87.70px;height:34.90px;"></div>
<div class="t" style="top:305.11px;font-size:19.3px;color:#f4f9ff;-webkit-text-stroke:0.23px #479efa;transform:scaleY(1.05);transform-origin:0 84.65%;left:-113.75px;width:1000px;text-align:center;">Clear</div>
<div class="t" style="top:305.76px;font-size:19.3px;color:#b9c1d1;-webkit-text-stroke:0.23px #2d3750;transform:scaleY(1.05);transform-origin:0 84.65%;letter-spacing:0.079px;left:464.00px;">Avergae:</div>
<div class="t" style="top:304.98px;font-size:22px;color:#ffffff;-webkit-text-stroke:0.16px #2d3750;transform:scaleY(1.05);transform-origin:0 84.65%;font-weight:700;letter-spacing:0.55px;left:548.05px;">130,7480</div>
<div style="position:absolute;left:25.50px;top:340.00px;width:841.00px;height:1.20px;background:#3d4966"></div>
<div class="inner" style="position:absolute;left:26.90px;top:352.30px;width:838.90px;height:293.50px;"></div>
<svg style="left:0;top:0" width="900" height="700" viewBox="0 0 900 700"><path d="M72.3 380.6 H851.5" stroke="#52618a" stroke-width="1.1" stroke-dasharray="2.4 0.9"/><path d="M72.3 424.6 H851.5" stroke="#52618a" stroke-width="1.1" stroke-dasharray="2.4 0.9"/><path d="M72.3 468.6 H851.5" stroke="#52618a" stroke-width="1.1" stroke-dasharray="2.4 0.9"/><path d="M72.3 512.0 H851.5" stroke="#52618a" stroke-width="1.1" stroke-dasharray="2.4 0.9"/><path d="M72.3 556.0 H851.5" stroke="#52618a" stroke-width="1.1" stroke-dasharray="2.4 0.9"/><path d="M72.3 599.3 H851.5" stroke="#5b6a8c" stroke-width="1.2"/><polyline fill="none" stroke="#a3c5e3" stroke-width="1.9" stroke-linejoin="round" points="71.6,485.6 81.0,485.6 88.0,555.9 93.5,419.7 102.0,575.4 109.0,415.6 116.0,509.1 121.5,392.8 126.0,529.2 130.5,395.7 136.0,550.9 140.5,393.1 146.0,497.0 150.5,421.0 156.0,568.9 161.5,409.3 167.0,563.8 174.0,403.7 178.5,539.6 183.0,382.5 190.0,547.4 192.0,475.4 194.0,393.8 198.3,543.5 201.9,419.1 204.9,472.1 207.4,475.5 211.0,522.0 213.5,399.6 215.5,495.2 217.5,395.7 220.0,552.1 222.0,412.0 225.0,573.0 228.0,475.8 230.5,476.3 234.1,404.8 238.4,541.3 241.4,383.6 245.7,471.5 247.7,469.5 252.0,540.0 255.6,397.1 259.9,466.7 263.4,463.7 267.0,545.0 270.0,389.0 272.5,592.2 274.5,377.7 278.8,543.0 281.8,371.0 284.3,542.4 286.3,388.9 288.3,532.5 290.3,387.8 292.8,579.5 297.1,375.5 299.6,458.2 303.9,533.9 308.2,456.0 310.7,455.6 313.2,415.1 315.7,578.1 318.7,394.4 320.7,583.4 323.2,451.3 325.7,451.6 328.2,451.6 330.2,376.2 333.8,542.9 336.8,451.5 338.8,378.3 340.8,447.6 343.3,452.6 346.3,555.5 350.6,396.7 353.1,554.9 356.1,422.0 358.1,451.7 360.6,513.3 363.6,410.6 367.2,518.3 369.2,394.1 371.2,445.2 373.7,448.6 375.7,568.9 380.0,387.3 382.0,561.6 385.6,398.7 389.9,447.7 391.9,514.7 395.5,424.3 397.5,573.9 399.5,411.2 402.0,592.8 404.5,410.1 406.5,587.4 409.0,441.0 411.0,385.0 413.0,589.0 417.3,394.6 420.9,507.7 423.9,389.5 427.5,564.0 430.0,441.2 433.6,408.3 435.6,540.8 438.1,444.3 440.6,440.2 443.6,369.6 445.6,440.9 448.1,439.0 450.6,556.4 453.1,375.4 455.1,540.3 458.1,423.6 461.1,575.6 464.1,441.2 467.6,438.0 470.6,436.2 474.1,437.8 478.4,435.9 481.4,433.3 483.9,432.7 488.2,435.9 492.5,402.7 496.1,434.7 498.1,537.1 500.6,389.4 504.2,431.6 507.7,432.3 511.3,521.2 513.3,397.3 515.3,555.2 518.3,427.2 520.3,401.8 523.9,565.3 526.9,396.8 531.2,424.6 535.5,558.5 538.0,407.9 542.3,426.7 545.8,422.3 550.1,524.4 552.1,420.3 556.4,414.1 558.4,421.4 560.4,417.0 563.9,418.6 566.9,572.1 571.2,397.2 573.2,561.7 576.2,391.4 579.2,528.3 581.2,412.3 583.7,387.0 586.7,579.4 589.7,410.5 591.7,564.6 594.2,395.3 596.7,517.7 601.0,391.2 605.3,515.4 607.3,409.4 610.8,410.4 614.4,398.8 618.0,584.9 621.0,411.1 624.5,413.9 628.8,417.7 633.1,538.0 636.7,398.0 640.3,545.9 642.3,410.3 645.8,409.8 648.3,385.0 650.8,414.8 654.3,414.6 656.3,516.6 658.3,383.5 660.8,413.6 663.3,508.6 665.3,413.6 668.8,414.6 671.3,413.2 674.8,410.9 678.4,417.7 680.9,414.1 683.9,433.8 686.4,430.7 690.7,553.6 693.7,429.2 696.2,431.4 698.2,403.5 701.8,543.5 704.8,428.8 707.3,387.6 709.3,431.2 711.8,429.3 716.1,548.3 718.6,429.0 720.6,428.0 724.1,429.5 728.4,375.3 732.0,571.0 734.0,387.5 738.3,549.8 740.3,428.5 743.8,430.5 747.4,392.4 751.7,513.7 756.0,430.4 758.5,428.8 762.1,389.1 764.1,573.9 768.4,384.1 771.4,559.1 773.4,433.7 775.9,428.8 778.9,410.2 781.4,586.6 785.7,390.4 789.3,577.5 792.3,429.9 795.9,419.9 798.4,429.2 801.4,531.2 805.7,407.1 808.2,427.6 811.7,428.0 814.7,575.1 819.0,401.3 823.3,536.9 825.3,392.2 828.9,540.1 830.9,392.4 832.0,431.3 835.5,431.3"/></svg>
<div class="t" style="top:374.16px;font-size:16px;color:#aab3c6;-webkit-text-stroke:0.19px #272f4a;transform:scaleY(1.05);transform-origin:0 84.65%;left:-939.50px;width:1000px;text-align:right;">250</div>
<div class="t" style="top:418.16px;font-size:16px;color:#aab3c6;-webkit-text-stroke:0.19px #272f4a;transform:scaleY(1.05);transform-origin:0 84.65%;left:-939.50px;width:1000px;text-align:right;">200</div>
<div class="t" style="top:462.16px;font-size:16px;color:#aab3c6;-webkit-text-stroke:0.19px #272f4a;transform:scaleY(1.05);transform-origin:0 84.65%;left:-939.50px;width:1000px;text-align:right;">150</div>
<div class="t" style="top:505.56px;font-size:16px;color:#aab3c6;-webkit-text-stroke:0.19px #272f4a;transform:scaleY(1.05);transform-origin:0 84.65%;left:-939.50px;width:1000px;text-align:right;">100</div>
<div class="t" style="top:549.56px;font-size:16px;color:#aab3c6;-webkit-text-stroke:0.19px #272f4a;transform:scaleY(1.05);transform-origin:0 84.65%;left:-939.50px;width:1000px;text-align:right;">50</div>
<div class="t" style="top:592.86px;font-size:16px;color:#aab3c6;-webkit-text-stroke:0.19px #272f4a;transform:scaleY(1.05);transform-origin:0 84.65%;left:-939.50px;width:1000px;text-align:right;">0</div>
<div class="t" style="top:617.55px;font-size:14px;color:#aab3c6;-webkit-text-stroke:0.17px #272f4a;transform:scaleY(1.05);transform-origin:0 84.65%;letter-spacing:-0.2px;left:-426.00px;width:1000px;text-align:center;">0</div>
<div class="t" style="top:617.55px;font-size:14px;color:#aab3c6;-webkit-text-stroke:0.17px #272f4a;transform:scaleY(1.05);transform-origin:0 84.65%;letter-spacing:-0.2px;left:-307.80px;width:1000px;text-align:center;">100</div>
<div class="t" style="top:617.55px;font-size:14px;color:#aab3c6;-webkit-text-stroke:0.17px #272f4a;transform:scaleY(1.05);transform-origin:0 84.65%;letter-spacing:-0.2px;left:-182.70px;width:1000px;text-align:center;">200</div>
<div class="t" style="top:617.55px;font-size:14px;color:#aab3c6;-webkit-text-stroke:0.17px #272f4a;transform:scaleY(1.05);transform-origin:0 84.65%;letter-spacing:-0.2px;left:-56.30px;width:1000px;text-align:center;">300</div>
<div class="t" style="top:617.55px;font-size:14px;color:#aab3c6;-webkit-text-stroke:0.17px #272f4a;transform:scaleY(1.05);transform-origin:0 84.65%;letter-spacing:-0.2px;left:70.60px;width:1000px;text-align:center;">400</div>
<div class="t" style="top:617.55px;font-size:14px;color:#aab3c6;-webkit-text-stroke:0.17px #272f4a;transform:scaleY(1.05);transform-origin:0 84.65%;letter-spacing:-0.2px;left:196.40px;width:1000px;text-align:center;">500</div>
<div class="t" style="top:617.55px;font-size:14px;color:#aab3c6;-webkit-text-stroke:0.17px #272f4a;transform:scaleY(1.05);transform-origin:0 84.65%;letter-spacing:-0.2px;left:323.20px;width:1000px;text-align:center;">600</div>
<div class="panel" style="position:absolute;left:8.00px;top:674.00px;width:878.00px;height:226.40px;"></div>
<div class="hdr" style="position:absolute;left:8.00px;top:674.00px;width:878.00px;height:42.00px;"></div>
<div class="t" style="top:687.26px;font-size:19.3px;color:#ffffff;-webkit-text-stroke:0.23px #364365;transform:scaleY(1.05);transform-origin:0 84.65%;letter-spacing:0.304px;left:25.40px;">Lockin Status</div>
<div class="t" style="top:734.36px;font-size:19.3px;color:#b9c1d1;-webkit-text-stroke:0.23px #2d3750;transform:scaleY(1.05);transform-origin:0 84.65%;left:-166.30px;width:1000px;text-align:center;">Initialized</div>
<div class="t" style="top:734.36px;font-size:19.3px;color:#b9c1d1;-webkit-text-stroke:0.23px #2d3750;transform:scaleY(1.05);transform-origin:0 84.65%;left:195.30px;width:1000px;text-align:center;">Locked</div>
<div class="t" style="top:768.96px;font-size:19.3px;color:#b9c1d1;-webkit-text-stroke:0.23px #2d3750;transform:scaleY(1.05);transform-origin:0 84.65%;letter-spacing:0.129px;left:25.40px;">Duration(ms):</div>
<div class="inp" style="position:absolute;left:162.50px;top:760.60px;width:343.10px;height:33.20px;"></div>
<div class="t" style="top:768.66px;font-size:19.3px;color:#e9edf5;-webkit-text-stroke:0.23px #0f1a36;transform:scaleY(1.05);transform-origin:0 84.65%;left:176.40px;">1</div>
<div class="inp" style="position:absolute;left:524.10px;top:760.60px;width:343.10px;height:33.20px;"></div>
<div class="t" style="top:817.96px;font-size:19.3px;color:#b9c1d1;-webkit-text-stroke:0.23px #2d3750;transform:scaleY(1.05);transform-origin:0 84.65%;left:-857.40px;width:1000px;text-align:right;">R(uv):</div>
<div class="t" style="top:818.38px;font-size:22px;color:#ffffff;-webkit-text-stroke:0.16px #2d3750;transform:scaleY(1.05);transform-origin:0 84.65%;font-weight:700;letter-spacing:0.612px;left:161.25px;">131240237.7322</div>
<div class="t" style="top:859.86px;font-size:19.3px;color:#b9c1d1;-webkit-text-stroke:0.23px #2d3750;transform:scaleY(1.05);transform-origin:0 84.65%;left:-857.40px;width:1000px;text-align:right;">osc freq:</div>
<div class="t" style="top:857.98px;font-size:22px;color:#ffffff;-webkit-text-stroke:0.16px #2d3750;transform:scaleY(1.05);transform-origin:0 84.65%;font-weight:700;left:162.50px;">--</div>
<div class="panel" style="position:absolute;left:8.00px;top:910.20px;width:878.00px;height:234.80px;"></div>
<div class="hdr" style="position:absolute;left:8.00px;top:910.20px;width:878.00px;height:42.00px;"></div>
<div class="t" style="top:923.46px;font-size:19.3px;color:#ffffff;-webkit-text-stroke:0.23px #364365;transform:scaleY(1.05);transform-origin:0 84.65%;letter-spacing:0.421px;left:26.15px;">Stage Setting</div>
<div class="t" style="top:970.26px;font-size:19.3px;color:#b9c1d1;-webkit-text-stroke:0.23px #2d3750;transform:scaleY(1.05);transform-origin:0 84.65%;left:-157.60px;width:1000px;text-align:center;">Initialized</div>
<div class="t" style="top:970.26px;font-size:19.3px;color:#b9c1d1;-webkit-text-stroke:0.23px #2d3750;transform:scaleY(1.05);transform-origin:0 84.65%;left:110.80px;width:1000px;text-align:center;">Moving</div>
<div class="t" style="top:1011.86px;font-size:19.3px;color:#b9c1d1;-webkit-text-stroke:0.23px #2d3750;transform:scaleY(1.05);transform-origin:0 84.65%;letter-spacing:-0.134px;left:26.15px;">Current Position:</div>
<div class="t" style="top:1054.76px;font-size:19.3px;color:#b9c1d1;-webkit-text-stroke:0.23px #2d3750;transform:scaleY(1.05);transform-origin:0 84.65%;letter-spacing:-0.017px;left:34.75px;">Target Position:</div>
<div class="t" style="top:1096.06px;font-size:19.3px;color:#b9c1d1;-webkit-text-stroke:0.23px #2d3750;transform:scaleY(1.05);transform-origin:0 84.65%;letter-spacing:-0.017px;left:34.75px;">Target Position:</div>
<div class="inp" style="position:absolute;left:173.70px;top:1004.20px;width:337.50px;height:33.20px;"></div>
<div class="t" style="top:1012.26px;font-size:19.3px;color:#e9edf5;-webkit-text-stroke:0.14px #0f1a36;transform:scaleY(1.05);transform-origin:0 84.65%;font-weight:700;left:187.00px;">--</div>
<div class="inp" style="position:absolute;left:173.70px;top:1047.80px;width:337.50px;height:33.20px;"></div>
<div class="t" style="top:1055.86px;font-size:19.3px;color:#e9edf5;-webkit-text-stroke:0.23px #0f1a36;transform:scaleY(1.05);transform-origin:0 84.65%;left:187.00px;">10.00</div>
<div class="inp" style="position:absolute;left:173.70px;top:1091.90px;width:337.50px;height:33.10px;"></div>
<div class="t" style="top:1099.91px;font-size:19.3px;color:#e9edf5;-webkit-text-stroke:0.23px #0f1a36;transform:scaleY(1.05);transform-origin:0 84.65%;left:187.00px;">10.00</div>
<div class="btn" style="position:absolute;left:529.00px;top:1003.10px;width:164.20px;height:34.90px;"></div>
<div class="t" style="top:1011.81px;font-size:19.3px;color:#f4f9ff;-webkit-text-stroke:0.23px #479efa;transform:scaleY(1.05);transform-origin:0 84.65%;left:111.10px;width:1000px;text-align:center;">Stop Move</div>
<div class="btn" style="position:absolute;left:529.00px;top:1046.80px;width:164.20px;height:34.90px;"></div>
<div class="t" style="top:1055.51px;font-size:19.3px;color:#f4f9ff;-webkit-text-stroke:0.23px #479efa;transform:scaleY(1.05);transform-origin:0 84.65%;left:111.10px;width:1000px;text-align:center;">Move Relative</div>
<div class="btn" style="position:absolute;left:702.30px;top:1046.80px;width:163.50px;height:34.90px;"></div>
<div class="t" style="top:1055.51px;font-size:19.3px;color:#f4f9ff;-webkit-text-stroke:0.23px #479efa;transform:scaleY(1.05);transform-origin:0 84.65%;left:284.05px;width:1000px;text-align:center;">Move Absolutely</div>
<div class="btn" style="position:absolute;left:529.00px;top:1090.80px;width:164.20px;height:35.00px;"></div>
<div class="t" style="top:1099.56px;font-size:19.3px;color:#f4f9ff;-webkit-text-stroke:0.23px #479efa;transform:scaleY(1.05);transform-origin:0 84.65%;left:111.10px;width:1000px;text-align:center;">Set Velocity</div>
<div class="panel" style="position:absolute;left:8.00px;top:1154.50px;width:878.00px;height:410.50px;"></div>
<div class="hdr" style="position:absolute;left:8.00px;top:1154.50px;width:878.00px;height:42.00px;"></div>
<div class="t" style="top:1167.76px;font-size:19.3px;color:#ffffff;-webkit-text-stroke:0.23px #364365;transform:scaleY(1.05);transform-origin:0 84.65%;letter-spacing:0.307px;left:25.40px;">Preject Manager</div>
<div class="inner" style="position:absolute;left:26.90px;top:1212.80px;width:838.90px;height:333.00px;"></div>
<div style="position:absolute;left:26.90px;top:1248.10px;width:838.90px;height:1.40px;background:#47546f"></div>
<div class="t" style="top:1219.76px;font-size:19.3px;color:#b9c1d1;-webkit-text-stroke:0.23px #272f4a;transform:scaleY(1.05);transform-origin:0 84.65%;letter-spacing:-0.428px;left:40.15px;">Singe Step Run Project 0</div>
<div style="position:absolute;left:26.90px;top:1283.70px;width:838.90px;height:1.40px;background:#47546f"></div>
<div class="t" style="top:1256.86px;font-size:19.3px;color:#b9c1d1;-webkit-text-stroke:0.23px #272f4a;transform:scaleY(1.05);transform-origin:0 84.65%;letter-spacing:-0.428px;left:40.15px;">Singe Step Run Project 1</div>
<div style="position:absolute;left:26.90px;top:1319.00px;width:838.90px;height:1.40px;background:#47546f"></div>
<div class="t" style="top:1292.46px;font-size:19.3px;color:#b9c1d1;-webkit-text-stroke:0.23px #272f4a;transform:scaleY(1.05);transform-origin:0 84.65%;letter-spacing:-0.417px;left:40.15px;">Singe Step Run Project 2</div>
<div style="position:absolute;left:26.90px;top:1355.00px;width:838.90px;height:1.40px;background:#47546f"></div>
<div class="t" style="top:1328.46px;font-size:19.3px;color:#b9c1d1;-webkit-text-stroke:0.23px #272f4a;transform:scaleY(1.05);transform-origin:0 84.65%;letter-spacing:-0.428px;left:40.15px;">Singe Step Run Project 3</div>
<div style="position:absolute;left:26.90px;top:1390.70px;width:838.90px;height:1.40px;background:#47546f"></div>
<div class="t" style="top:1364.06px;font-size:19.3px;color:#b9c1d1;-webkit-text-stroke:0.23px #272f4a;transform:scaleY(1.05);transform-origin:0 84.65%;letter-spacing:-0.439px;left:40.15px;">Singe Step Run Project 4</div>
<div style="position:absolute;left:26.90px;top:1425.90px;width:838.90px;height:1.40px;background:#47546f"></div>
<div class="t" style="top:1399.76px;font-size:19.3px;color:#b9c1d1;-webkit-text-stroke:0.23px #272f4a;transform:scaleY(1.05);transform-origin:0 84.65%;letter-spacing:-0.428px;left:40.15px;">Singe Step Run Project 5</div>
<div style="position:absolute;left:26.90px;top:1461.90px;width:838.90px;height:1.40px;background:#47546f"></div>
<div class="t" style="top:1435.76px;font-size:19.3px;color:#b9c1d1;-webkit-text-stroke:0.23px #272f4a;transform:scaleY(1.05);transform-origin:0 84.65%;letter-spacing:-0.428px;left:40.15px;">Singe Step Run Project 6</div>
<div style="position:absolute;left:26.90px;top:1497.60px;width:838.90px;height:1.40px;background:#47546f"></div>
<div class="t" style="top:1471.36px;font-size:19.3px;color:#b9c1d1;-webkit-text-stroke:0.23px #272f4a;transform:scaleY(1.05);transform-origin:0 84.65%;letter-spacing:-0.417px;left:40.15px;">Singe Step Run Project 7</div>
<div style="position:absolute;left:26.90px;top:1532.20px;width:838.90px;height:1.40px;background:#47546f"></div>
<div class="t" style="top:1507.36px;font-size:19.3px;color:#b9c1d1;-webkit-text-stroke:0.23px #272f4a;transform:scaleY(1.05);transform-origin:0 84.65%;letter-spacing:-0.428px;left:40.15px;">Singe Step Run Project 8</div>
<div style="position:absolute;left:871.10px;top:1234.80px;width:8.70px;height:66.40px;background:#5a6789;border-radius:4.5px"></div>
<div class="panel" style="position:absolute;left:894.50px;top:245.00px;width:1905.50px;height:655.60px;"></div>
<div class="hdr" style="position:absolute;left:894.50px;top:245.00px;width:1905.50px;height:42.60px;"></div>
<div class="t" style="top:258.96px;font-size:19.3px;color:#ffffff;-webkit-text-stroke:0.23px #364365;transform:scaleY(1.05);transform-origin:0 84.65%;letter-spacing:-0.032px;left:912.65px;">Sing Step Run Project 0</div>
<div class="t" style="top:306.26px;font-size:19.3px;color:#b9c1d1;-webkit-text-stroke:0.23px #2d3750;transform:scaleY(1.05);transform-origin:0 84.65%;letter-spacing:-0.016px;left:912.75px;">Y Axis Data Type:</div>
<div class="inp" style="position:absolute;left:1072.90px;top:296.80px;width:228.70px;height:34.10px;"></div>
<div class="t" style="top:305.31px;font-size:19.3px;color:#e9edf5;-webkit-text-stroke:0.23px #0f1a36;transform:scaleY(1.05);transform-origin:0 84.65%;left:1080.00px;">X</div>
<div class="btn" style="position:absolute;left:1310.50px;top:296.00px;width:178.20px;height:35.70px;"></div>
<div class="t" style="top:305.11px;font-size:19.3px;color:#f4f9ff;-webkit-text-stroke:0.23px #479efa;transform:scaleY(1.05);transform-origin:0 84.65%;left:899.60px;width:1000px;text-align:center;">Load from Local</div>
<div class="btn" style="position:absolute;left:1497.60px;top:296.00px;width:87.40px;height:35.70px;"></div>
<div class="t" style="top:305.11px;font-size:19.3px;color:#f4f9ff;-webkit-text-stroke:0.23px #479efa;transform:scaleY(1.05);transform-origin:0 84.65%;left:1041.30px;width:1000px;text-align:center;">Start</div>
<div class="btn" style="position:absolute;left:1593.50px;top:296.00px;width:87.40px;height:35.70px;"></div>
<div class="t" style="top:305.11px;font-size:19.3px;color:#f4f9ff;-webkit-text-stroke:0.23px #479efa;transform:scaleY(1.05);transform-origin:0 84.65%;left:1137.20px;width:1000px;text-align:center;">Stop</div>
<div class="btn" style="position:absolute;left:1689.80px;top:296.00px;width:87.30px;height:35.70px;"></div>
<div class="t" style="top:305.11px;font-size:19.3px;color:#f4f9ff;-webkit-text-stroke:0.23px #479efa;transform:scaleY(1.05);transform-origin:0 84.65%;left:1233.45px;width:1000px;text-align:center;">Hide</div>
<div style="position:absolute;left:1817.50px;top:305.80px;width:482.30px;height:13.70px;background:#66728f;border-radius:7px"></div>
<div style="position:absolute;left:1817.50px;top:305.80px;width:255.90px;height:13.70px;background:linear-gradient(90deg,#3696fb,#5db9ff);border-radius:7px"></div>
<div class="t" style="top:306.46px;font-size:19.3px;color:#ffffff;-webkit-text-stroke:0.23px #2d3750;transform:scaleY(1.05);transform-origin:0 84.65%;left:2320.00px;">50%</div>
<div style="position:absolute;left:913.00px;top:339.90px;width:127.70px;height:35.00px;background:#4a5c8d;border-radius:6px 6px 0 0"></div>
<div class="t" style="top:349.26px;font-size:19.3px;color:#ffffff;-webkit-text-stroke:0.23px #4a5c8d;transform:scaleY(1.05);transform-origin:0 84.65%;left:476.85px;width:1000px;text-align:center;">Raw Data</div>
<div style="position:absolute;left:1043.00px;top:339.90px;width:127.80px;height:35.00px;background:#364263;border-radius:6px 6px 0 0"></div>
<div class="t" style="top:349.26px;font-size:19.3px;color:#c3cad8;-webkit-text-stroke:0.23px #364263;transform:scaleY(1.05);transform-origin:0 84.65%;left:606.90px;width:1000px;text-align:center;">Analyze</div>
<div style="position:absolute;left:1173.10px;top:339.90px;width:128.10px;height:35.00px;background:#364263;border-radius:6px 6px 0 0"></div>
<div class="t" style="top:349.26px;font-size:19.3px;color:#c3cad8;-webkit-text-stroke:0.23px #364263;transform:scaleY(1.05);transform-origin:0 84.65%;left:737.15px;width:1000px;text-align:center;">Analyze Log</div>
<div style="position:absolute;left:1303.10px;top:339.90px;width:148.70px;height:35.00px;background:#364263;border-radius:6px 6px 0 0"></div>
<div class="t" style="top:349.26px;font-size:19.3px;color:#c3cad8;-webkit-text-stroke:0.23px #364263;transform:scaleY(1.05);transform-origin:0 84.65%;left:877.45px;width:1000px;text-align:center;">Preject Setting</div>
<div class="inner" style="position:absolute;left:913.00px;top:374.80px;width:1604.00px;height:504.80px;"></div>
<svg style="left:0;top:0px" width="2802" height="900" viewBox="0 0 2802 900"><path d="M967.6 414.5 H2477.8" stroke="#4c5a7e" stroke-width="1" stroke-dasharray="2.4 0.9"/><path d="M967.6 496.8 H2477.8" stroke="#4c5a7e" stroke-width="1" stroke-dasharray="2.4 0.9"/><path d="M967.6 579.8 H2477.8" stroke="#4c5a7e" stroke-width="1" stroke-dasharray="2.4 0.9"/><path d="M967.6 663.2 H2477.8" stroke="#4c5a7e" stroke-width="1" stroke-dasharray="2.4 0.9"/><path d="M967.6 745.2 H2477.8" stroke="#4c5a7e" stroke-width="1" stroke-dasharray="2.4 0.9"/><path d="M967.6 828.2 H2477.8" stroke="#5b6a8c" stroke-width="1.2"/><polyline fill="none" stroke="#a3c5e3" stroke-width="2" stroke-linejoin="round" points="974.4,474.5 977.3,484.9 979.1,484.9 983.7,497.5 986.3,495.7 989.9,495.7 994.2,493.9 998.8,495.7 1004.9,495.0 1009.6,507.6 1013.2,508.3 1017.2,524.1 1022.2,520.2 1026.5,516.9 1031.2,515.9 1037.7,513.3 1041.2,524.8 1044.8,521.2 1050.2,532.7 1054.9,529.2 1059.9,529.5 1068.9,531.7 1071.4,555.0 1073.6,548.9 1078.6,547.5 1082.6,544.2 1088.0,551.4 1091.6,549.3 1095.9,552.5 1100.5,556.1 1102.3,561.9 1105.6,562.9 1110.3,567.6 1114.9,565.1 1117.4,580.2 1122.1,584.5 1129.3,584.9 1131.8,596.7 1137.2,596.7 1140.1,594.9 1142.6,595.3 1145.1,592.4 1149.1,603.6 1153.4,604.6 1157.3,605.0 1159.5,602.5 1162.4,614.0 1166.3,613.3 1171.4,623.3 1175.3,625.5 1177.5,623.7 1182.1,625.5 1189.3,623.3 1194.7,620.4 1200.1,620.1 1202.6,618.6 1210.9,618.6 1215.6,620.8 1223.5,618.6 1227.8,620.1 1230.7,624.4 1234.2,624.4 1236.8,622.2 1239.6,624.0 1246.8,623.0 1247.5,618.3 1257.6,618.3 1264.8,615.8 1270.2,617.6 1273.8,617.6 1276.7,619.0 1279.9,617.2 1283.8,617.2 1286.7,614.3 1290.0,625.1 1296.4,624.0 1300.0,624.8 1311.5,611.8 1313.0,603.6 1316.2,602.5 1322.3,597.1 1325.5,610.4 1327.0,607.1 1332.0,611.1 1336.3,620.1 1338.5,619.0 1341.4,614.3 1350.0,612.5 1351.8,620.1 1361.8,607.1 1364.7,607.9 1367.9,605.0 1371.5,603.9 1376.6,603.9 1379.8,605.7 1385.2,606.1 1389.5,608.2 1393.1,608.6 1397.8,602.1 1400.3,602.8 1403.9,605.7 1407.5,607.1 1410.4,606.4 1414.0,604.3 1416.5,604.6 1418.6,606.1 1421.1,605.3 1424.0,601.8 1427.6,602.1 1431.9,601.4 1440.2,617.6 1443.8,617.9 1447.0,621.5 1451.3,620.8 1455.6,629.4 1459.2,629.1 1464.3,630.9 1466.4,627.3 1471.5,629.8 1476.1,630.1 1477.6,644.5 1487.6,643.4 1490.1,646.0 1492.7,654.6 1495.5,644.9 1499.5,645.2 1509.2,647.8 1511.0,646.7 1515.3,647.0 1524.3,650.6 1527.2,650.3 1532.6,648.1 1535.1,650.3 1542.3,647.0 1545.9,643.8 1549.5,643.4 1552.3,639.5 1557.7,642.0 1562.0,642.4 1564.2,645.2 1567.1,653.9 1570.3,653.9 1578.2,652.1 1580.0,649.9 1584.7,653.2 1588.3,653.5 1591.1,651.7 1594.7,651.4 1598.3,647.4 1606.2,647.8 1610.5,649.2 1614.1,651.4 1617.0,651.7 1620.3,653.5 1624.2,652.4 1628.5,652.1 1631.4,649.6 1634.3,649.9 1657.6,728.6 1660.5,731.5 1663.7,730.4 1666.6,730.1 1669.1,728.3 1676.3,729.0 1676.2,728.6 1692.4,711.4 1697.8,713.5 1699.2,707.8 1703.2,708.5 1705.7,712.8 1711.8,711.0 1715.4,713.5 1719.0,710.3 1726.2,707.1 1728.0,710.7 1731.6,710.7 1733.4,715.7 1738.4,717.1 1743.5,711.4 1749.9,712.1 1760.7,699.5 1766.5,700.6 1767.9,707.8 1772.2,708.5 1772.9,713.5 1777.2,713.5 1780.1,717.1 1784.4,714.6 1787.3,716.4 1789.5,713.9 1791.6,719.3 1794.8,720.4 1798.8,731.5 1803.8,730.8 1805.3,725.8 1808.1,725.0 1811.7,728.6 1819.6,725.4 1821.4,729.4 1825.4,728.6 1829.7,733.0 1833.3,733.3 1838.0,729.0 1842.3,727.2 1845.2,727.9 1849.5,724.3 1854.2,725.4 1860.3,726.8 1866.7,733.0 1872.1,731.5 1875.7,733.0 1880.0,727.2 1887.9,726.8 1890.8,725.4 1893.3,727.6 1901.6,724.7 1910.9,730.8 1919.6,728.6 1922.4,730.8 1925.7,725.0 1928.6,723.6 1936.5,724.0 1937.5,725.8 1941.9,725.4 1944.0,723.3 1945.8,718.2 1950.1,717.5 1953.7,718.2 1958.4,717.1 1962.0,720.0 1966.3,720.7 1969.9,720.4 1973.5,721.5 1980.7,719.7 1988.6,727.2 1995.0,726.5 1997.9,727.6 2003.3,725.0 2005.8,724.7 2007.6,720.7 2011.2,720.7 2013.7,722.5 2019.5,721.5 2022.0,726.5 2026.7,727.2 2031.0,725.4 2035.7,727.6 2039.3,725.4 2044.6,727.2 2047.9,725.0 2050.8,726.5 2056.2,726.5 2060.8,725.0 2064.4,726.8 2068.7,738.7 2070.5,739.4 2075.9,735.8 2078.8,736.9 2081.3,733.3 2084.2,733.0 2087.4,731.2 2092.1,733.0 2097.5,729.0 2100.0,728.6 2105.8,731.5 2111.9,733.3 2112.2,736.2 2115.8,734.4 2121.9,739.4 2129.1,734.0 2133.4,737.6 2140.6,737.3 2145.3,735.1 2147.8,736.2 2155.0,730.4 2159.7,731.2 2164.7,729.7 2173.0,736.2 2176.2,738.0 2178.4,735.8 2181.2,736.9 2183.7,735.8 2190.9,734.8 2193.8,736.2 2196.3,736.5 2201.0,732.6 2205.3,733.7 2208.2,733.0 2216.1,733.3 2219.0,735.1 2221.5,733.7 2224.4,733.7 2228.7,731.5 2232.3,730.8 2235.9,732.2 2239.5,734.8 2243.1,733.3 2246.6,734.4 2251.0,736.5 2255.6,735.8 2264.6,736.5 2268.2,734.0 2279.7,734.4 2284.4,736.2 2288.0,734.4 2293.4,733.7 2298.8,734.4 2306.0,736.5 2313.1,735.8 2314.9,734.0 2317.8,734.4 2325.7,727.6 2331.1,727.9 2334.0,726.8 2337.2,729.4 2340.8,729.0 2346.6,734.8 2350.9,734.0 2353.8,732.6 2359.9,733.3 2362.7,732.2 2366.0,734.8 2369.9,733.0 2374.2,733.3 2377.8,734.8 2380.7,737.3 2385.0,736.5 2387.5,738.0 2390.4,735.8 2395.8,739.8 2399.4,739.1 2403.0,737.3 2406.6,738.0 2409.5,736.9 2412.7,738.3 2415.6,741.2 2418.5,741.9 2424.6,746.6 2427.4,744.8 2430.7,744.8 2433.5,743.4 2438.9,744.5 2443.3,747.3 2446.1,745.5 2454.4,743.7 2458.7,746.3 2461.6,744.8 2464.8,748.1 2470.6,745.9"/></svg>
<div class="t" style="top:407.79px;font-size:17.5px;color:#aab3c6;-webkit-text-stroke:0.21px #272f4a;transform:scaleY(1.05);transform-origin:0 84.65%;letter-spacing:-0.5px;left:928.05px;">250</div>
<div class="t" style="top:490.09px;font-size:17.5px;color:#aab3c6;-webkit-text-stroke:0.21px #272f4a;transform:scaleY(1.05);transform-origin:0 84.65%;letter-spacing:-0.5px;left:928.05px;">200</div>
<div class="t" style="top:573.09px;font-size:17.5px;color:#aab3c6;-webkit-text-stroke:0.21px #272f4a;transform:scaleY(1.05);transform-origin:0 84.65%;letter-spacing:-0.25px;left:927.55px;">150</div>
<div class="t" style="top:656.49px;font-size:17.5px;color:#aab3c6;-webkit-text-stroke:0.21px #272f4a;transform:scaleY(1.05);transform-origin:0 84.65%;letter-spacing:-0.25px;left:927.55px;">100</div>
<div class="t" style="top:738.49px;font-size:17.5px;color:#aab3c6;-webkit-text-stroke:0.21px #272f4a;transform:scaleY(1.05);transform-origin:0 84.65%;letter-spacing:-0.9px;left:937.70px;">50</div>
<div class="t" style="top:821.49px;font-size:17.5px;color:#aab3c6;-webkit-text-stroke:0.21px #272f4a;transform:scaleY(1.05);transform-origin:0 84.65%;letter-spacing:-0.15px;left:946.70px;">0</div>
<div class="t" style="top:845.93px;font-size:14.5px;color:#aab3c6;-webkit-text-stroke:0.17px #272f4a;transform:scaleY(1.05);transform-origin:0 84.65%;letter-spacing:-0.4px;left:469.40px;width:1000px;text-align:center;">0</div>
<div class="t" style="top:845.93px;font-size:14.5px;color:#aab3c6;-webkit-text-stroke:0.17px #272f4a;transform:scaleY(1.05);transform-origin:0 84.65%;letter-spacing:-0.4px;left:708.40px;width:1000px;text-align:center;">100</div>
<div class="t" style="top:845.93px;font-size:14.5px;color:#aab3c6;-webkit-text-stroke:0.17px #272f4a;transform:scaleY(1.05);transform-origin:0 84.65%;letter-spacing:-0.4px;left:956.70px;width:1000px;text-align:center;">200</div>
<div class="t" style="top:845.93px;font-size:14.5px;color:#aab3c6;-webkit-text-stroke:0.17px #272f4a;transform:scaleY(1.05);transform-origin:0 84.65%;letter-spacing:-0.4px;left:1205.00px;width:1000px;text-align:center;">300</div>
<div class="t" style="top:845.93px;font-size:14.5px;color:#aab3c6;-webkit-text-stroke:0.17px #272f4a;transform:scaleY(1.05);transform-origin:0 84.65%;letter-spacing:-0.4px;left:1453.00px;width:1000px;text-align:center;">400</div>
<div class="t" style="top:845.93px;font-size:14.5px;color:#aab3c6;-webkit-text-stroke:0.17px #272f4a;transform:scaleY(1.05);transform-origin:0 84.65%;letter-spacing:-0.4px;left:1702.50px;width:1000px;text-align:center;">500</div>
<div class="t" style="top:845.93px;font-size:14.5px;color:#aab3c6;-webkit-text-stroke:0.17px #272f4a;transform:scaleY(1.05);transform-origin:0 84.65%;letter-spacing:-0.4px;left:1950.50px;width:1000px;text-align:center;">600</div>
<div style="position:absolute;left:2535.20px;top:296.10px;width:264.80px;height:41.90px;background:#42527c;border-radius:4px 0 0 0"></div>
<div class="t" style="top:309.21px;font-size:19.6px;color:#ffffff;-webkit-text-stroke:0.24px #42527c;transform:scaleY(1.05);transform-origin:0 84.65%;left:2552.60px;">System</div>
<div style="position:absolute;left:2535.20px;top:347.00px;width:264.80px;height:203.60px;border:1px solid #44517a;border-right:0;background:#2d3750"></div>
<div style="position:absolute;left:2535.20px;top:347.00px;width:264.80px;height:40.80px;background:#42527c;border-radius:4px 0 0 0"></div>
<div class="t" style="top:359.41px;font-size:19.6px;color:#ffffff;-webkit-text-stroke:0.24px #42527c;transform:scaleY(1.05);transform-origin:0 84.65%;left:2552.60px;">Sample</div>
<div class="t" style="top:400.14px;font-size:18.5px;color:#d5dae5;-webkit-text-stroke:0.22px #2d3750;transform:scaleY(1.05);transform-origin:0 84.65%;left:2552.60px;">Sample Setting</div>
<div class="t" style="top:435.14px;font-size:18.5px;color:#b9c1d1;-webkit-text-stroke:0.22px #2d3750;transform:scaleY(1.05);transform-origin:0 84.65%;left:2552.60px;">TL:</div>
<div class="t" style="top:433.88px;font-size:24px;color:#ffffff;-webkit-text-stroke:0.17px #2d3750;transform:scaleY(1.05);transform-origin:0 84.65%;font-weight:700;left:2589.50px;">1</div>
<div class="t" style="top:476.34px;font-size:18.5px;color:#b9c1d1;-webkit-text-stroke:0.22px #2d3750;transform:scaleY(1.05);transform-origin:0 84.65%;left:2559.40px;">N:</div>
<div class="t" style="top:475.08px;font-size:24px;color:#ffffff;-webkit-text-stroke:0.17px #2d3750;transform:scaleY(1.05);transform-origin:0 84.65%;font-weight:700;left:2589.50px;">2</div>
<div class="t" style="top:513.84px;font-size:18.5px;color:#b9c1d1;-webkit-text-stroke:0.22px #2d3750;transform:scaleY(1.05);transform-origin:0 84.65%;left:2552.60px;">Fit Number:</div>
<div class="t" style="top:512.58px;font-size:24px;color:#ffffff;-webkit-text-stroke:0.17px #2d3750;transform:scaleY(1.05);transform-origin:0 84.65%;font-weight:700;left:2666.00px;">2</div>
<div style="position:absolute;left:2535.20px;top:559.80px;width:264.80px;height:41.20px;background:#42527c;border-radius:4px 0 0 0"></div>
<div class="t" style="top:571.01px;font-size:19.6px;color:#ffffff;-webkit-text-stroke:0.24px #42527c;transform:scaleY(1.05);transform-origin:0 84.65%;letter-spacing:0.15px;left:2552.60px;">Fiting Setting</div>
<div class="panel" style="position:absolute;left:894.50px;top:909.50px;width:1905.50px;height:655.60px;"></div>
<div class="hdr" style="position:absolute;left:894.50px;top:909.50px;width:1905.50px;height:42.60px;"></div>
<div class="t" style="top:923.46px;font-size:19.3px;color:#ffffff;-webkit-text-stroke:0.23px #364365;transform:scaleY(1.05);transform-origin:0 84.65%;letter-spacing:-0.032px;left:912.65px;">Sing Step Run Project 0</div>
<div class="t" style="top:970.76px;font-size:19.3px;color:#b9c1d1;-webkit-text-stroke:0.23px #2d3750;transform:scaleY(1.05);transform-origin:0 84.65%;letter-spacing:-0.016px;left:912.75px;">Y Axis Data Type:</div>
<div class="inp" style="position:absolute;left:1072.90px;top:961.30px;width:228.70px;height:34.10px;"></div>
<div class="t" style="top:969.81px;font-size:19.3px;color:#e9edf5;-webkit-text-stroke:0.23px #0f1a36;transform:scaleY(1.05);transform-origin:0 84.65%;left:1080.00px;">X</div>
<div class="btn" style="position:absolute;left:1310.50px;top:960.50px;width:178.20px;height:35.70px;"></div>
<div class="t" style="top:969.61px;font-size:19.3px;color:#f4f9ff;-webkit-text-stroke:0.23px #479efa;transform:scaleY(1.05);transform-origin:0 84.65%;left:899.60px;width:1000px;text-align:center;">Load from Local</div>
<div class="btn" style="position:absolute;left:1497.60px;top:960.50px;width:87.40px;height:35.70px;"></div>
<div class="t" style="top:969.61px;font-size:19.3px;color:#f4f9ff;-webkit-text-stroke:0.23px #479efa;transform:scaleY(1.05);transform-origin:0 84.65%;left:1041.30px;width:1000px;text-align:center;">Start</div>
<div class="btn" style="position:absolute;left:1593.50px;top:960.50px;width:87.40px;height:35.70px;"></div>
<div class="t" style="top:969.61px;font-size:19.3px;color:#f4f9ff;-webkit-text-stroke:0.23px #479efa;transform:scaleY(1.05);transform-origin:0 84.65%;left:1137.20px;width:1000px;text-align:center;">Stop</div>
<div class="btn" style="position:absolute;left:1689.80px;top:960.50px;width:87.30px;height:35.70px;"></div>
<div class="t" style="top:969.61px;font-size:19.3px;color:#f4f9ff;-webkit-text-stroke:0.23px #479efa;transform:scaleY(1.05);transform-origin:0 84.65%;left:1233.45px;width:1000px;text-align:center;">Hide</div>
<div style="position:absolute;left:1817.50px;top:970.30px;width:482.30px;height:13.70px;background:#66728f;border-radius:7px"></div>
<div style="position:absolute;left:1817.50px;top:970.30px;width:255.90px;height:13.70px;background:linear-gradient(90deg,#3696fb,#5db9ff);border-radius:7px"></div>
<div class="t" style="top:970.96px;font-size:19.3px;color:#ffffff;-webkit-text-stroke:0.23px #2d3750;transform:scaleY(1.05);transform-origin:0 84.65%;left:2320.00px;">50%</div>
<div style="position:absolute;left:913.00px;top:1004.40px;width:127.70px;height:35.00px;background:#4a5c8d;border-radius:6px 6px 0 0"></div>
<div class="t" style="top:1013.76px;font-size:19.3px;color:#ffffff;-webkit-text-stroke:0.23px #4a5c8d;transform:scaleY(1.05);transform-origin:0 84.65%;left:476.85px;width:1000px;text-align:center;">Raw Data</div>
<div style="position:absolute;left:1043.00px;top:1004.40px;width:127.80px;height:35.00px;background:#364263;border-radius:6px 6px 0 0"></div>
<div class="t" style="top:1013.76px;font-size:19.3px;color:#c3cad8;-webkit-text-stroke:0.23px #364263;transform:scaleY(1.05);transform-origin:0 84.65%;left:606.90px;width:1000px;text-align:center;">Analyze</div>
<div style="position:absolute;left:1173.10px;top:1004.40px;width:128.10px;height:35.00px;background:#364263;border-radius:6px 6px 0 0"></div>
<div class="t" style="top:1013.76px;font-size:19.3px;color:#c3cad8;-webkit-text-stroke:0.23px #364263;transform:scaleY(1.05);transform-origin:0 84.65%;left:737.15px;width:1000px;text-align:center;">Analyze Log</div>
<div style="position:absolute;left:1303.10px;top:1004.40px;width:148.70px;height:35.00px;background:#364263;border-radius:6px 6px 0 0"></div>
<div class="t" style="top:1013.76px;font-size:19.3px;color:#c3cad8;-webkit-text-stroke:0.23px #364263;transform:scaleY(1.05);transform-origin:0 84.65%;left:877.45px;width:1000px;text-align:center;">Preject Setting</div>
<div class="inner" style="position:absolute;left:913.00px;top:1039.30px;width:1604.00px;height:504.80px;"></div>
<svg style="left:0;top:664.5px" width="2802" height="900" viewBox="0 0 2802 900"><path d="M967.6 414.5 H2477.8" stroke="#4c5a7e" stroke-width="1" stroke-dasharray="2.4 0.9"/><path d="M967.6 496.8 H2477.8" stroke="#4c5a7e" stroke-width="1" stroke-dasharray="2.4 0.9"/><path d="M967.6 579.8 H2477.8" stroke="#4c5a7e" stroke-width="1" stroke-dasharray="2.4 0.9"/><path d="M967.6 663.2 H2477.8" stroke="#4c5a7e" stroke-width="1" stroke-dasharray="2.4 0.9"/><path d="M967.6 745.2 H2477.8" stroke="#4c5a7e" stroke-width="1" stroke-dasharray="2.4 0.9"/><path d="M967.6 828.2 H2477.8" stroke="#5b6a8c" stroke-width="1.2"/><polyline fill="none" stroke="#a3c5e3" stroke-width="2" stroke-linejoin="round" points="974.4,474.5 977.3,484.9 979.1,484.9 983.7,497.5 986.3,495.7 989.9,495.7 994.2,493.9 998.8,495.7 1004.9,495.0 1009.6,507.6 1013.2,508.3 1017.2,524.1 1022.2,520.2 1026.5,516.9 1031.2,515.9 1037.7,513.3 1041.2,524.8 1044.8,521.2 1050.2,532.7 1054.9,529.2 1059.9,529.5 1068.9,531.7 1071.4,555.0 1073.6,548.9 1078.6,547.5 1082.6,544.2 1088.0,551.4 1091.6,549.3 1095.9,552.5 1100.5,556.1 1102.3,561.9 1105.6,562.9 1110.3,567.6 1114.9,565.1 1117.4,580.2 1122.1,584.5 1129.3,584.9 1131.8,596.7 1137.2,596.7 1140.1,594.9 1142.6,595.3 1145.1,592.4 1149.1,603.6 1153.4,604.6 1157.3,605.0 1159.5,602.5 1162.4,614.0 1166.3,613.3 1171.4,623.3 1175.3,625.5 1177.5,623.7 1182.1,625.5 1189.3,623.3 1194.7,620.4 1200.1,620.1 1202.6,618.6 1210.9,618.6 1215.6,620.8 1223.5,618.6 1227.8,620.1 1230.7,624.4 1234.2,624.4 1236.8,622.2 1239.6,624.0 1246.8,623.0 1247.5,618.3 1257.6,618.3 1264.8,615.8 1270.2,617.6 1273.8,617.6 1276.7,619.0 1279.9,617.2 1283.8,617.2 1286.7,614.3 1290.0,625.1 1296.4,624.0 1300.0,624.8 1311.5,611.8 1313.0,603.6 1316.2,602.5 1322.3,597.1 1325.5,610.4 1327.0,607.1 1332.0,611.1 1336.3,620.1 1338.5,619.0 1341.4,614.3 1350.0,612.5 1351.8,620.1 1361.8,607.1 1364.7,607.9 1367.9,605.0 1371.5,603.9 1376.6,603.9 1379.8,605.7 1385.2,606.1 1389.5,608.2 1393.1,608.6 1397.8,602.1 1400.3,602.8 1403.9,605.7 1407.5,607.1 1410.4,606.4 1414.0,604.3 1416.5,604.6 1418.6,606.1 1421.1,605.3 1424.0,601.8 1427.6,602.1 1431.9,601.4 1440.2,617.6 1443.8,617.9 1447.0,621.5 1451.3,620.8 1455.6,629.4 1459.2,629.1 1464.3,630.9 1466.4,627.3 1471.5,629.8 1476.1,630.1 1477.6,644.5 1487.6,643.4 1490.1,646.0 1492.7,654.6 1495.5,644.9 1499.5,645.2 1509.2,647.8 1511.0,646.7 1515.3,647.0 1524.3,650.6 1527.2,650.3 1532.6,648.1 1535.1,650.3 1542.3,647.0 1545.9,643.8 1549.5,643.4 1552.3,639.5 1557.7,642.0 1562.0,642.4 1564.2,645.2 1567.1,653.9 1570.3,653.9 1578.2,652.1 1580.0,649.9 1584.7,653.2 1588.3,653.5 1591.1,651.7 1594.7,651.4 1598.3,647.4 1606.2,647.8 1610.5,649.2 1614.1,651.4 1617.0,651.7 1620.3,653.5 1624.2,652.4 1628.5,652.1 1631.4,649.6 1634.3,649.9 1657.6,728.6 1660.5,731.5 1663.7,730.4 1666.6,730.1 1669.1,728.3 1676.3,729.0 1676.2,728.6 1692.4,711.4 1697.8,713.5 1699.2,707.8 1703.2,708.5 1705.7,712.8 1711.8,711.0 1715.4,713.5 1719.0,710.3 1726.2,707.1 1728.0,710.7 1731.6,710.7 1733.4,715.7 1738.4,717.1 1743.5,711.4 1749.9,712.1 1760.7,699.5 1766.5,700.6 1767.9,707.8 1772.2,708.5 1772.9,713.5 1777.2,713.5 1780.1,717.1 1784.4,714.6 1787.3,716.4 1789.5,713.9 1791.6,719.3 1794.8,720.4 1798.8,731.5 1803.8,730.8 1805.3,725.8 1808.1,725.0 1811.7,728.6 1819.6,725.4 1821.4,729.4 1825.4,728.6 1829.7,733.0 1833.3,733.3 1838.0,729.0 1842.3,727.2 1845.2,727.9 1849.5,724.3 1854.2,725.4 1860.3,726.8 1866.7,733.0 1872.1,731.5 1875.7,733.0 1880.0,727.2 1887.9,726.8 1890.8,725.4 1893.3,727.6 1901.6,724.7 1910.9,730.8 1919.6,728.6 1922.4,730.8 1925.7,725.0 1928.6,723.6 1936.5,724.0 1937.5,725.8 1941.9,725.4 1944.0,723.3 1945.8,718.2 1950.1,717.5 1953.7,718.2 1958.4,717.1 1962.0,720.0 1966.3,720.7 1969.9,720.4 1973.5,721.5 1980.7,719.7 1988.6,727.2 1995.0,726.5 1997.9,727.6 2003.3,725.0 2005.8,724.7 2007.6,720.7 2011.2,720.7 2013.7,722.5 2019.5,721.5 2022.0,726.5 2026.7,727.2 2031.0,725.4 2035.7,727.6 2039.3,725.4 2044.6,727.2 2047.9,725.0 2050.8,726.5 2056.2,726.5 2060.8,725.0 2064.4,726.8 2068.7,738.7 2070.5,739.4 2075.9,735.8 2078.8,736.9 2081.3,733.3 2084.2,733.0 2087.4,731.2 2092.1,733.0 2097.5,729.0 2100.0,728.6 2105.8,731.5 2111.9,733.3 2112.2,736.2 2115.8,734.4 2121.9,739.4 2129.1,734.0 2133.4,737.6 2140.6,737.3 2145.3,735.1 2147.8,736.2 2155.0,730.4 2159.7,731.2 2164.7,729.7 2173.0,736.2 2176.2,738.0 2178.4,735.8 2181.2,736.9 2183.7,735.8 2190.9,734.8 2193.8,736.2 2196.3,736.5 2201.0,732.6 2205.3,733.7 2208.2,733.0 2216.1,733.3 2219.0,735.1 2221.5,733.7 2224.4,733.7 2228.7,731.5 2232.3,730.8 2235.9,732.2 2239.5,734.8 2243.1,733.3 2246.6,734.4 2251.0,736.5 2255.6,735.8 2264.6,736.5 2268.2,734.0 2279.7,734.4 2284.4,736.2 2288.0,734.4 2293.4,733.7 2298.8,734.4 2306.0,736.5 2313.1,735.8 2314.9,734.0 2317.8,734.4 2325.7,727.6 2331.1,727.9 2334.0,726.8 2337.2,729.4 2340.8,729.0 2346.6,734.8 2350.9,734.0 2353.8,732.6 2359.9,733.3 2362.7,732.2 2366.0,734.8 2369.9,733.0 2374.2,733.3 2377.8,734.8 2380.7,737.3 2385.0,736.5 2387.5,738.0 2390.4,735.8 2395.8,739.8 2399.4,739.1 2403.0,737.3 2406.6,738.0 2409.5,736.9 2412.7,738.3 2415.6,741.2 2418.5,741.9 2424.6,746.6 2427.4,744.8 2430.7,744.8 2433.5,743.4 2438.9,744.5 2443.3,747.3 2446.1,745.5 2454.4,743.7 2458.7,746.3 2461.6,744.8 2464.8,748.1 2470.6,745.9"/></svg>
<div class="t" style="top:1072.29px;font-size:17.5px;color:#aab3c6;-webkit-text-stroke:0.21px #272f4a;transform:scaleY(1.05);transform-origin:0 84.65%;letter-spacing:-0.5px;left:928.05px;">250</div>
<div class="t" style="top:1154.59px;font-size:17.5px;color:#aab3c6;-webkit-text-stroke:0.21px #272f4a;transform:scaleY(1.05);transform-origin:0 84.65%;letter-spacing:-0.5px;left:928.05px;">200</div>
<div class="t" style="top:1237.59px;font-size:17.5px;color:#aab3c6;-webkit-text-stroke:0.21px #272f4a;transform:scaleY(1.05);transform-origin:0 84.65%;letter-spacing:-0.25px;left:927.55px;">150</div>
<div class="t" style="top:1320.99px;font-size:17.5px;color:#aab3c6;-webkit-text-stroke:0.21px #272f4a;transform:scaleY(1.05);transform-origin:0 84.65%;letter-spacing:-0.25px;left:927.55px;">100</div>
<div class="t" style="top:1402.99px;font-size:17.5px;color:#aab3c6;-webkit-text-stroke:0.21px #272f4a;transform:scaleY(1.05);transform-origin:0 84.65%;letter-spacing:-0.9px;left:937.70px;">50</div>
<div class="t" style="top:1485.99px;font-size:17.5px;color:#aab3c6;-webkit-text-stroke:0.21px #272f4a;transform:scaleY(1.05);transform-origin:0 84.65%;letter-spacing:-0.15px;left:946.70px;">0</div>
<div class="t" style="top:1510.43px;font-size:14.5px;color:#aab3c6;-webkit-text-stroke:0.17px #272f4a;transform:scaleY(1.05);transform-origin:0 84.65%;letter-spacing:-0.4px;left:469.40px;width:1000px;text-align:center;">0</div>
<div class="t" style="top:1510.43px;font-size:14.5px;color:#aab3c6;-webkit-text-stroke:0.17px #272f4a;transform:scaleY(1.05);transform-origin:0 84.65%;letter-spacing:-0.4px;left:708.40px;width:1000px;text-align:center;">100</div>
<div class="t" style="top:1510.43px;font-size:14.5px;color:#aab3c6;-webkit-text-stroke:0.17px #272f4a;transform:scaleY(1.05);transform-origin:0 84.65%;letter-spacing:-0.4px;left:956.70px;width:1000px;text-align:center;">200</div>
<div class="t" style="top:1510.43px;font-size:14.5px;color:#aab3c6;-webkit-text-stroke:0.17px #272f4a;transform:scaleY(1.05);transform-origin:0 84.65%;letter-spacing:-0.4px;left:1205.00px;width:1000px;text-align:center;">300</div>
<div class="t" style="top:1510.43px;font-size:14.5px;color:#aab3c6;-webkit-text-stroke:0.17px #272f4a;transform:scaleY(1.05);transform-origin:0 84.65%;letter-spacing:-0.4px;left:1453.00px;width:1000px;text-align:center;">400</div>
<div class="t" style="top:1510.43px;font-size:14.5px;color:#aab3c6;-webkit-text-stroke:0.17px #272f4a;transform:scaleY(1.05);transform-origin:0 84.65%;letter-spacing:-0.4px;left:1702.50px;width:1000px;text-align:center;">500</div>
<div class="t" style="top:1510.43px;font-size:14.5px;color:#aab3c6;-webkit-text-stroke:0.17px #272f4a;transform:scaleY(1.05);transform-origin:0 84.65%;letter-spacing:-0.4px;left:1950.50px;width:1000px;text-align:center;">600</div>
<div style="position:absolute;left:2535.20px;top:960.60px;width:264.80px;height:41.90px;background:#42527c;border-radius:4px 0 0 0"></div>
<div class="t" style="top:973.71px;font-size:19.6px;color:#ffffff;-webkit-text-stroke:0.24px #42527c;transform:scaleY(1.05);transform-origin:0 84.65%;left:2552.60px;">System</div>
<div style="position:absolute;left:2535.20px;top:1011.50px;width:264.80px;height:203.60px;border:1px solid #44517a;border-right:0;background:#2d3750"></div>
<div style="position:absolute;left:2535.20px;top:1011.50px;width:264.80px;height:40.80px;background:#42527c;border-radius:4px 0 0 0"></div>
<div class="t" style="top:1023.91px;font-size:19.6px;color:#ffffff;-webkit-text-stroke:0.24px #42527c;transform:scaleY(1.05);transform-origin:0 84.65%;left:2552.60px;">Sample</div>
<div class="t" style="top:1064.64px;font-size:18.5px;color:#d5dae5;-webkit-text-stroke:0.22px #2d3750;transform:scaleY(1.05);transform-origin:0 84.65%;left:2552.60px;">Sample Setting</div>
<div class="t" style="top:1099.64px;font-size:18.5px;color:#b9c1d1;-webkit-text-stroke:0.22px #2d3750;transform:scaleY(1.05);transform-origin:0 84.65%;left:2552.60px;">TL:</div>
<div class="t" style="top:1098.38px;font-size:24px;color:#ffffff;-webkit-text-stroke:0.17px #2d3750;transform:scaleY(1.05);transform-origin:0 84.65%;font-weight:700;left:2589.50px;">1</div>
<div class="t" style="top:1140.84px;font-size:18.5px;color:#b9c1d1;-webkit-text-stroke:0.22px #2d3750;transform:scaleY(1.05);transform-origin:0 84.65%;left:2559.40px;">N:</div>
<div class="t" style="top:1139.58px;font-size:24px;color:#ffffff;-webkit-text-stroke:0.17px #2d3750;transform:scaleY(1.05);transform-origin:0 84.65%;font-weight:700;left:2589.50px;">2</div>
<div class="t" style="top:1178.34px;font-size:18.5px;color:#b9c1d1;-webkit-text-stroke:0.22px #2d3750;transform:scaleY(1.05);transform-origin:0 84.65%;left:2552.60px;">Fit Number:</div>
<div class="t" style="top:1177.08px;font-size:24px;color:#ffffff;-webkit-text-stroke:0.17px #2d3750;transform:scaleY(1.05);transform-origin:0 84.65%;font-weight:700;left:2666.00px;">2</div>
<div style="position:absolute;left:2535.20px;top:1224.30px;width:264.80px;height:41.20px;background:#42527c;border-radius:4px 0 0 0"></div>
<div class="t" style="top:1235.51px;font-size:19.6px;color:#ffffff;-webkit-text-stroke:0.24px #42527c;transform:scaleY(1.05);transform-origin:0 84.65%;letter-spacing:0.15px;left:2552.60px;">Fiting Setting</div>
</div></div></body></html>
